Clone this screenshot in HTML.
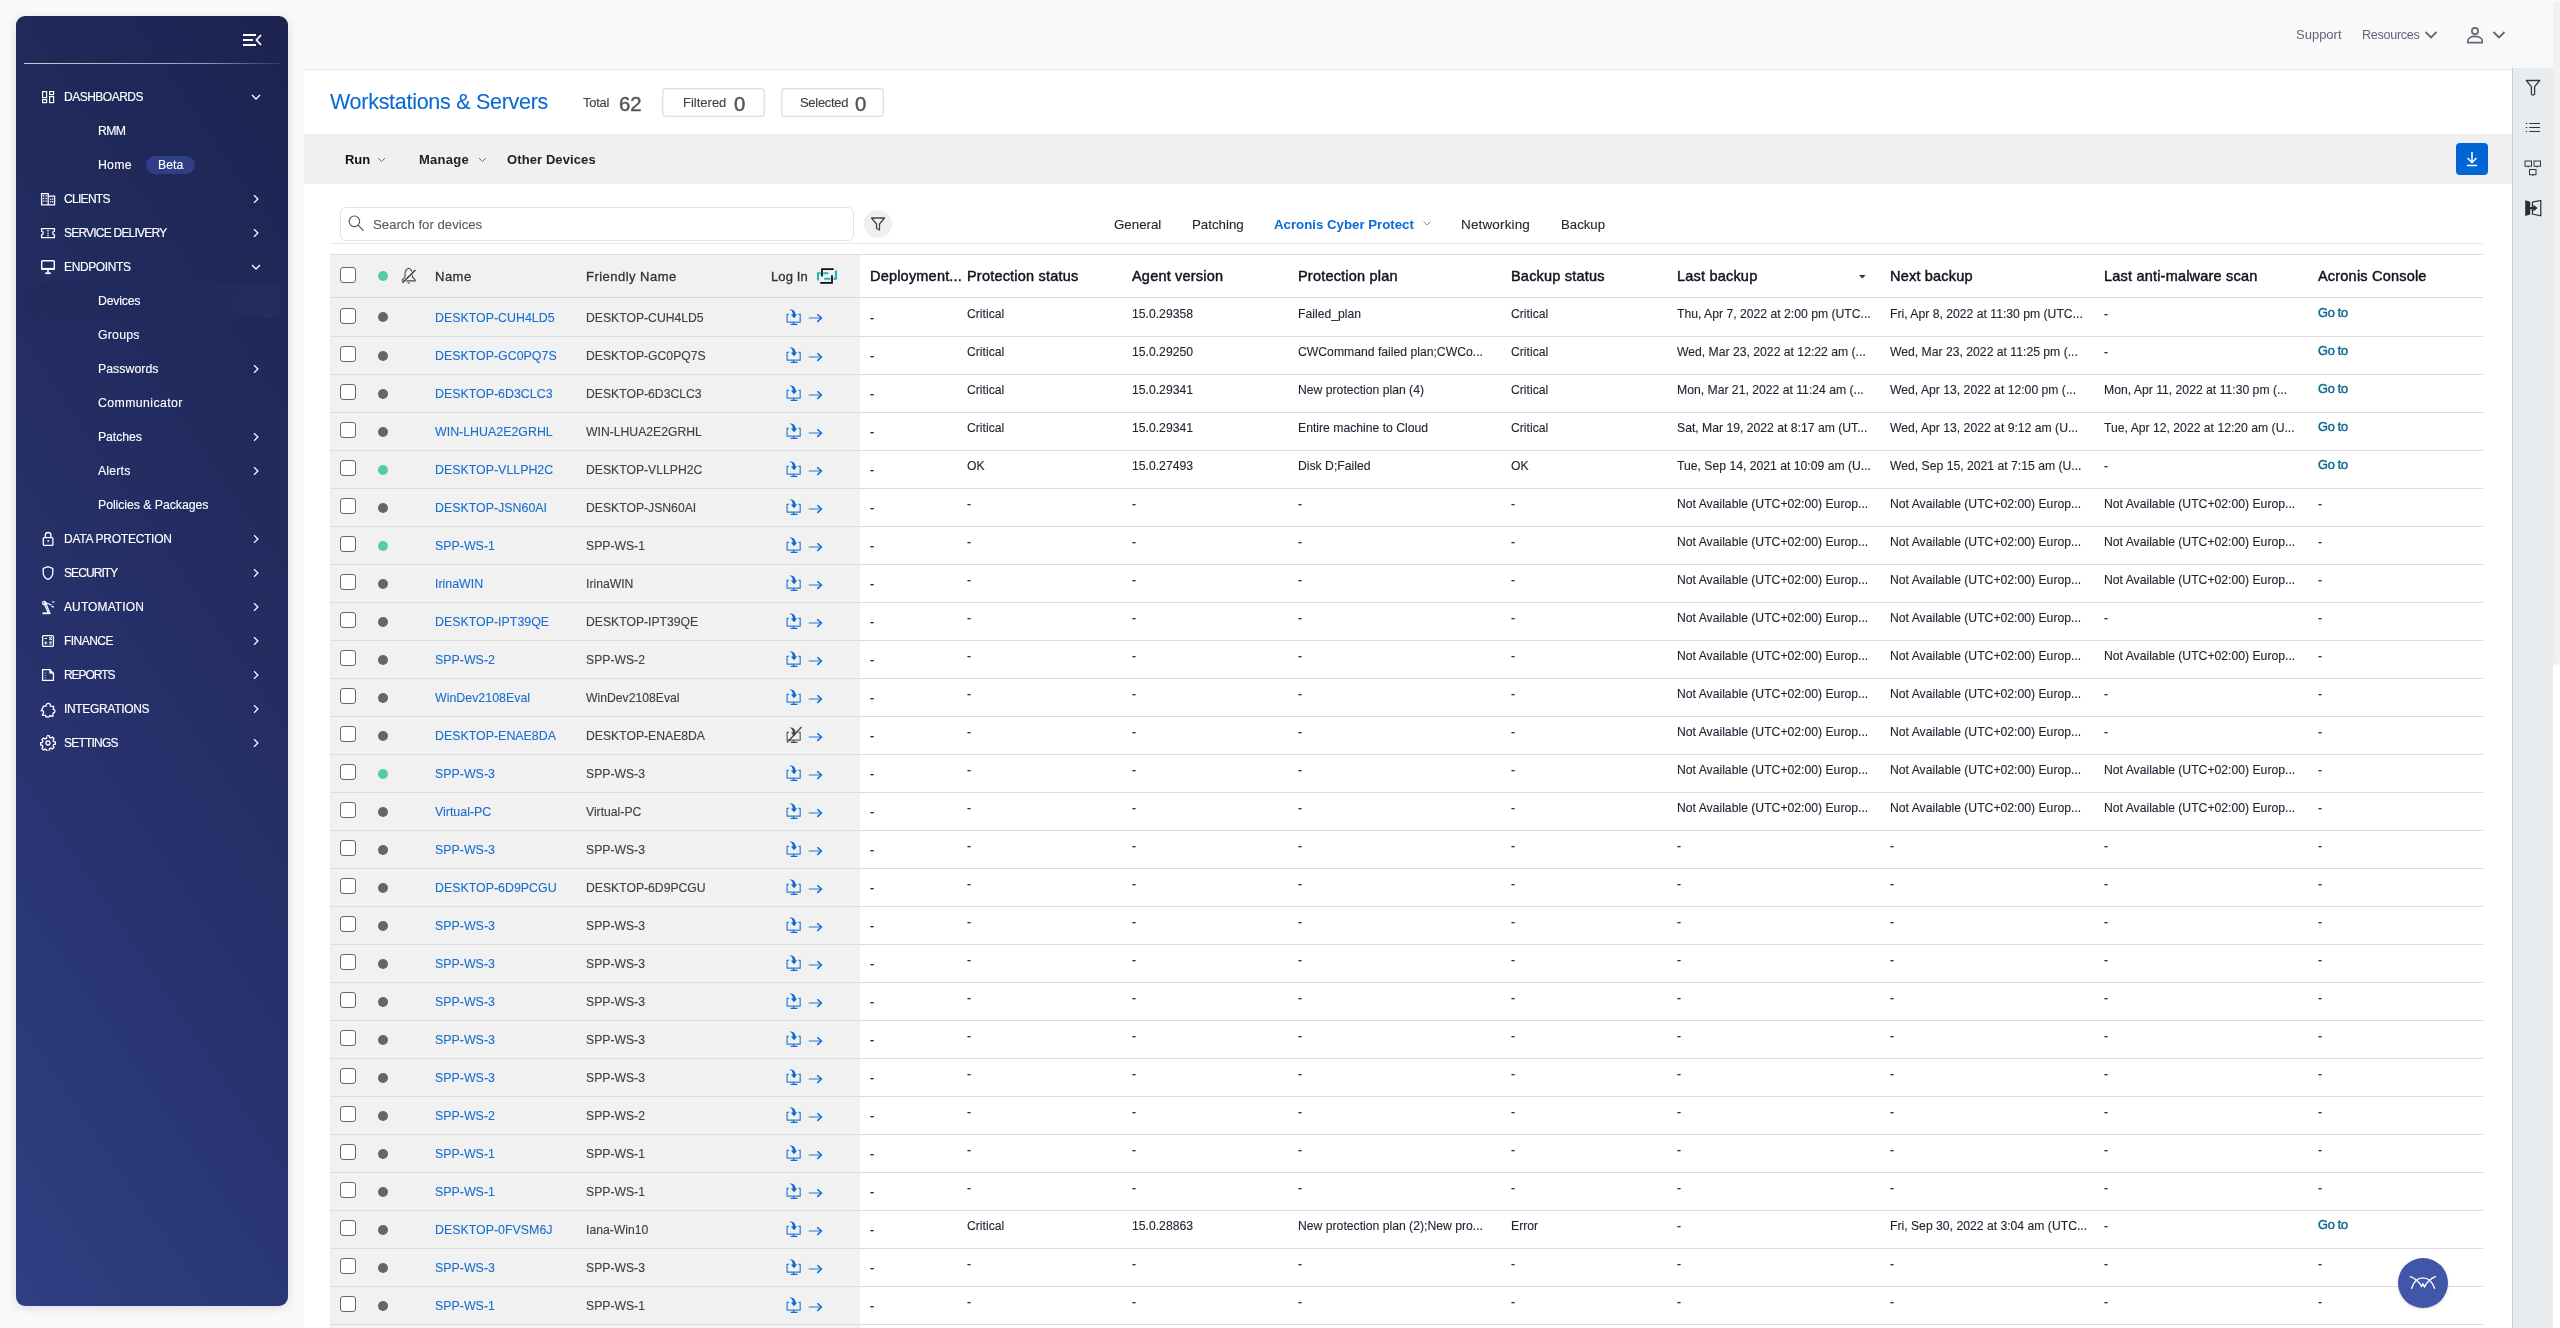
<!DOCTYPE html>
<html><head><meta charset="utf-8"><title>Workstations &amp; Servers</title>
<style>
html,body{margin:0;padding:0;width:2560px;height:1328px;overflow:hidden;background:#f9f9f9}
body{position:relative;font-family:"Liberation Sans",sans-serif;-webkit-font-smoothing:antialiased}
.t{position:absolute;white-space:nowrap}
#w{position:absolute;left:0;top:0;width:2560px;height:1328px;overflow:hidden;will-change:transform}
.r{position:absolute;display:block}
</style></head><body><div id="w">
<div class="r" style="left:0px;top:0px;width:2560px;height:1328px;background:#f9f9f9"></div>
<div class="r" style="left:304px;top:69px;width:2209px;height:1259px;background:#fff;border-top:1px solid #e9e9e9"></div>
<div class="r" style="left:2512px;top:68px;width:41px;height:1260px;background:#e9ecee;border-left:1px solid #c9cccf"></div>
<div class="r" style="left:2553px;top:0px;width:7px;height:1328px;background:#fff"></div>
<div class="r" style="left:2553px;top:0px;width:7px;height:665px;background:#f1f1f1;border-radius:3.5px"></div>
<div class="r" style="left:16px;top:16px;width:272px;height:1290px;border-radius:9px;background:linear-gradient(236deg,#1c2350 0%,#212a5c 28%,#27326d 60%,#2f3f82 100%);box-shadow:0 2px 10px rgba(0,0,0,0.12)"></div>
<svg class="r" style="left:242px;top:33px" width="20" height="14" viewBox="0 0 20 14"><g stroke="#fff" stroke-width="2" fill="none"><path d="M1 2H14M1 7H11M1 12H14"/><path d="M19 2L14.5 7L19 12" stroke-width="1.8"/></g></svg>
<div class="r" style="left:24px;top:63px;width:256px;height:1px;background:linear-gradient(90deg,rgba(255,255,255,0.75),rgba(255,255,255,0.55) 70%,rgba(255,255,255,0.08))"></div>
<div class="r" style="left:24px;top:284px;width:256px;height:34px;background:linear-gradient(90deg,rgba(8,12,45,0.08),rgba(8,12,45,0.02) 55%,rgba(255,255,255,0.025));border-radius:6px"></div>
<div class="t" style="left:64px;top:89.84px;font-size:12px;line-height:14px;color:#fff;letter-spacing:-0.502px;-webkit-text-stroke:0.15px #fff;">DASHBOARDS</div>
<svg class="r" style="left:251px;top:94px" width="10" height="7" viewBox="0 0 10 7"><path d="M1 1L5 5L9 1" stroke="#fff" stroke-width="1.4" fill="none"/></svg>
<div class="t" style="left:64px;top:191.84px;font-size:12px;line-height:14px;color:#fff;letter-spacing:-0.695px;-webkit-text-stroke:0.15px #fff;">CLIENTS</div>
<svg class="r" style="left:253px;top:194px" width="7" height="10" viewBox="0 0 7 10"><path d="M1 1.2L4.9 5L1 8.8" stroke="#fff" stroke-width="1.25" fill="none"/></svg>
<div class="t" style="left:64px;top:225.84px;font-size:12px;line-height:14px;color:#fff;letter-spacing:-0.787px;-webkit-text-stroke:0.15px #fff;">SERVICE DELIVERY</div>
<svg class="r" style="left:253px;top:228px" width="7" height="10" viewBox="0 0 7 10"><path d="M1 1.2L4.9 5L1 8.8" stroke="#fff" stroke-width="1.25" fill="none"/></svg>
<div class="t" style="left:64px;top:259.84px;font-size:12px;line-height:14px;color:#fff;letter-spacing:-0.375px;-webkit-text-stroke:0.15px #fff;">ENDPOINTS</div>
<svg class="r" style="left:251px;top:264px" width="10" height="7" viewBox="0 0 10 7"><path d="M1 1L5 5L9 1" stroke="#fff" stroke-width="1.4" fill="none"/></svg>
<div class="t" style="left:64px;top:531.84px;font-size:12px;line-height:14px;color:#fff;letter-spacing:-0.26px;-webkit-text-stroke:0.15px #fff;">DATA PROTECTION</div>
<svg class="r" style="left:253px;top:534px" width="7" height="10" viewBox="0 0 7 10"><path d="M1 1.2L4.9 5L1 8.8" stroke="#fff" stroke-width="1.25" fill="none"/></svg>
<div class="t" style="left:64px;top:565.84px;font-size:12px;line-height:14px;color:#fff;letter-spacing:-0.925px;-webkit-text-stroke:0.15px #fff;">SECURITY</div>
<svg class="r" style="left:253px;top:568px" width="7" height="10" viewBox="0 0 7 10"><path d="M1 1.2L4.9 5L1 8.8" stroke="#fff" stroke-width="1.25" fill="none"/></svg>
<div class="t" style="left:64px;top:599.84px;font-size:12px;line-height:14px;color:#fff;letter-spacing:0.103px;-webkit-text-stroke:0.15px #fff;">AUTOMATION</div>
<svg class="r" style="left:253px;top:602px" width="7" height="10" viewBox="0 0 7 10"><path d="M1 1.2L4.9 5L1 8.8" stroke="#fff" stroke-width="1.25" fill="none"/></svg>
<div class="t" style="left:64px;top:633.84px;font-size:12px;line-height:14px;color:#fff;letter-spacing:-0.529px;-webkit-text-stroke:0.15px #fff;">FINANCE</div>
<svg class="r" style="left:253px;top:636px" width="7" height="10" viewBox="0 0 7 10"><path d="M1 1.2L4.9 5L1 8.8" stroke="#fff" stroke-width="1.25" fill="none"/></svg>
<div class="t" style="left:64px;top:667.84px;font-size:12px;line-height:14px;color:#fff;letter-spacing:-1.047px;-webkit-text-stroke:0.15px #fff;">REPORTS</div>
<svg class="r" style="left:253px;top:670px" width="7" height="10" viewBox="0 0 7 10"><path d="M1 1.2L4.9 5L1 8.8" stroke="#fff" stroke-width="1.25" fill="none"/></svg>
<div class="t" style="left:64px;top:701.84px;font-size:12px;line-height:14px;color:#fff;letter-spacing:-0.327px;-webkit-text-stroke:0.15px #fff;">INTEGRATIONS</div>
<svg class="r" style="left:253px;top:704px" width="7" height="10" viewBox="0 0 7 10"><path d="M1 1.2L4.9 5L1 8.8" stroke="#fff" stroke-width="1.25" fill="none"/></svg>
<div class="t" style="left:64px;top:735.84px;font-size:12px;line-height:14px;color:#fff;letter-spacing:-0.783px;-webkit-text-stroke:0.15px #fff;">SETTINGS</div>
<svg class="r" style="left:253px;top:738px" width="7" height="10" viewBox="0 0 7 10"><path d="M1 1.2L4.9 5L1 8.8" stroke="#fff" stroke-width="1.25" fill="none"/></svg>
<div class="t" style="left:98px;top:123.94px;font-size:12.3px;line-height:15px;color:#fff;letter-spacing:-0.688px;-webkit-text-stroke:0.12px #fff;">RMM</div>
<div class="t" style="left:98px;top:157.94px;font-size:12.3px;line-height:15px;color:#fff;letter-spacing:0.229px;-webkit-text-stroke:0.12px #fff;">Home</div>
<div class="t" style="left:98px;top:293.94px;font-size:12.3px;line-height:15px;color:#fff;letter-spacing:-0.211px;-webkit-text-stroke:0.12px #fff;">Devices</div>
<div class="t" style="left:98px;top:327.94px;font-size:12.3px;line-height:15px;color:#fff;letter-spacing:0.231px;-webkit-text-stroke:0.12px #fff;">Groups</div>
<div class="t" style="left:98px;top:361.94px;font-size:12.3px;line-height:15px;color:#fff;letter-spacing:0.041px;-webkit-text-stroke:0.12px #fff;">Passwords</div>
<svg class="r" style="left:253px;top:364px" width="7" height="10" viewBox="0 0 7 10"><path d="M1 1.2L4.9 5L1 8.8" stroke="#fff" stroke-width="1.25" fill="none"/></svg>
<div class="t" style="left:98px;top:395.94px;font-size:12.3px;line-height:15px;color:#fff;letter-spacing:0.409px;-webkit-text-stroke:0.12px #fff;">Communicator</div>
<div class="t" style="left:98px;top:429.94px;font-size:12.3px;line-height:15px;color:#fff;letter-spacing:-0.095px;-webkit-text-stroke:0.12px #fff;">Patches</div>
<svg class="r" style="left:253px;top:432px" width="7" height="10" viewBox="0 0 7 10"><path d="M1 1.2L4.9 5L1 8.8" stroke="#fff" stroke-width="1.25" fill="none"/></svg>
<div class="t" style="left:98px;top:463.94px;font-size:12.3px;line-height:15px;color:#fff;letter-spacing:0.169px;-webkit-text-stroke:0.12px #fff;">Alerts</div>
<svg class="r" style="left:253px;top:466px" width="7" height="10" viewBox="0 0 7 10"><path d="M1 1.2L4.9 5L1 8.8" stroke="#fff" stroke-width="1.25" fill="none"/></svg>
<div class="t" style="left:98px;top:497.94px;font-size:12.3px;line-height:15px;color:#fff;letter-spacing:-0.056px;-webkit-text-stroke:0.12px #fff;">Policies &amp; Packages</div>
<div class="r" style="left:146px;top:156px;width:49px;height:18px;background:#2f3f86;border-radius:9px"></div>
<div class="t" style="left:158px;top:157.94px;font-size:12.3px;line-height:15px;color:#fff;-webkit-text-stroke:0.12px #fff;">Beta</div>
<svg class="r" style="left:41px;top:90px" width="14" height="14" viewBox="0 0 14 14"><g stroke="#fff" stroke-width="1.2" fill="none"><rect x="1.6" y="1.6" width="4" height="6"/><rect x="8.6" y="1.6" width="4" height="3"/><rect x="1.6" y="9.6" width="4" height="3"/><rect x="8.6" y="6.6" width="4" height="6"/></g></svg>
<svg class="r" style="left:40px;top:192px" width="16" height="14" viewBox="0 0 16 14"><g stroke="#fff" stroke-width="1.2" fill="none"><path d="M1.6 12.5V1.6H8.2V12.5M8.2 4.1H14.6V12.5M1 12.8H15.2" stroke-width="1.3"/></g><g fill="#fff"><rect x="3" y="3.3" width="1.3" height="1.3"/><rect x="5.5" y="3.3" width="1.3" height="1.3"/><rect x="3" y="5.9" width="1.3" height="1.3"/><rect x="5.5" y="5.9" width="1.3" height="1.3"/><rect x="3" y="8.5" width="1.3" height="1.3"/><rect x="5.5" y="8.5" width="1.3" height="1.3"/><rect x="10" y="6.5" width="1.3" height="1.3"/><rect x="12" y="6.5" width="1.3" height="1.3"/><rect x="10" y="9" width="1.3" height="1.3"/><rect x="12" y="9" width="1.3" height="1.3"/></g></svg>
<svg class="r" style="left:40px;top:226px" width="16" height="14" viewBox="0 0 16 14"><g stroke="#fff" stroke-width="1.2" fill="none"><path d="M1.6 2.6H14.4V5.4A1.7 1.7 0 0 0 14.4 8.8V11.6H1.6V8.8A1.7 1.7 0 0 0 1.6 5.4Z" stroke-width="1.3"/><path d="M8 4v1.4M8 6.4v1.4M8 8.8v1.4" stroke-width="1.3"/></g></svg>
<svg class="r" style="left:40px;top:259px" width="16" height="16" viewBox="0 0 16 16"><g stroke="#fff" stroke-width="1.2" fill="none"><rect x="1.7" y="1.7" width="12.6" height="8.6" rx="0.8" stroke-width="1.4"/><path d="M1.7 9.8H14.3" stroke-width="1.8"/><path d="M8 11v2.2" stroke-width="1.6"/><path d="M5.2 14.2H10.8" stroke-width="1.8"/></g></svg>
<svg class="r" style="left:41px;top:531px" width="13" height="16" viewBox="0 0 13 16"><g stroke="#fff" stroke-width="1.2" fill="none"><rect x="2.3" y="6.6" width="9.6" height="7.8" rx="0.9" stroke-width="1.3"/><path d="M4.3 6.6V4.3A2.8 2.8 0 0 1 9.9 4.3V6.6" stroke-width="1.3"/></g><rect x="6.4" y="9.2" width="1.6" height="1.6" fill="#fff"/></svg>
<svg class="r" style="left:41px;top:565px" width="13" height="16" viewBox="0 0 13 16"><g stroke="#fff" stroke-width="1.2" fill="none"><path d="M7 1.6L2.2 3.4V7.8C2.2 10.8 4.2 13.2 7 14.4C9.8 13.2 11.8 10.8 11.8 7.8V3.4Z" stroke-width="1.3"/></g></svg>
<svg class="r" style="left:41px;top:600px" width="15" height="15" viewBox="0 0 15 15"><g stroke="#fff" stroke-width="1.2" fill="none"><path d="M1.5 13.3H9.5" stroke-width="1.8"/><path d="M3 3.2L7.2 12.8M4.6 2.5L8.6 12.8M3.4 2.6L9 4.3" /><circle cx="3.2" cy="3" r="1.6"/><path d="M9 4.3L10.6 5.3M11 2.2A2 2 0 0 1 13.4 2.2M10.6 6.2A2 2 0 0 0 12.8 6.6"/></g></svg>
<svg class="r" style="left:41px;top:634px" width="14" height="14" viewBox="0 0 14 14"><g stroke="#fff" stroke-width="1.2" fill="none"><rect x="1.6" y="1.6" width="10.8" height="10.8" rx="1.2" stroke-width="1.3"/><path d="M3.4 4.5H6M8.4 3.2L10.8 5.8M10.8 3.2L8.4 5.8M3.4 9H6.2M4.8 7.6V10.4M8.2 8.1H10.8M8.2 10H10.8" stroke-width="1.1"/></g></svg>
<svg class="r" style="left:41px;top:668px" width="14" height="14" viewBox="0 0 14 14"><g stroke="#fff" stroke-width="1.2" fill="none"><path d="M1.6 1.6H8.8L12.4 5.2V12.4H1.6Z" stroke-width="1.3"/><path d="M8.8 1.6V5.2H12.4" stroke-width="1"/><path d="M9 2L12 5H9Z" fill="#fff" stroke="none"/><path d="M4.3 4.6v0.8M4.3 7v0.8M4.3 9.4v0.8" stroke-width="1"/></g></svg>
<svg class="r" style="left:40px;top:702px" width="16" height="16" viewBox="0 0 16 16"><g stroke="#fff" stroke-width="1.2" fill="none"><path d="M3.5 4.2L6 4.2C6 2.4 7 1.4 8.4 1.4C9.8 1.4 10.5 2.6 10.4 4.2L13.6 4.4L13.2 7.2C14.6 7.4 15 8.3 15 9.1C15 10 14.4 10.8 13.2 11L12.8 14.2L9.6 13.8C9.4 15 8.6 15.2 7.6 15.2C6.4 15.2 5.6 14.6 5.6 13.4L2.4 13.2C2.8 12 3.6 11.2 3.6 10.2C3.6 9 2.4 8.6 1.4 8.6L3.5 4.2Z" stroke-width="1.3"/></g></svg>
<svg class="r" style="left:40px;top:735px" width="16" height="16" viewBox="0 0 16 16"><g stroke="#fff" stroke-width="1.2" fill="none"><circle cx="8" cy="8" r="2" stroke-width="1.3"/><path d="M6.9 1.5H9.1L9.5 3.2L10.9 3.9L12.5 3L14 4.6L13.1 6.1L13.7 7.6L15.4 8V10.1L13.7 10.5L13.1 11.9L14 13.5L12.5 15L10.9 14.1L9.5 14.8L9.1 16.5" transform="translate(0,-1)" stroke-width="1.3"/><path d="M9.1 15.5H6.9L6.5 13.8L5.1 13.1L3.5 14L2 12.4L2.9 10.9L2.3 9.4L0.6 9V6.9L2.3 6.5L2.9 5.1L2 3.5L3.5 2L5.1 2.9L6.5 2.2L6.9 0.5" transform="translate(0,1)" stroke-width="1.3"/></g></svg>
<div class="t" style="left:2296px;top:26.50px;font-size:13px;line-height:16px;color:#5f6676;">Support</div>
<div class="t" style="left:2362px;top:28.13px;font-size:12.6px;line-height:15px;color:#5f6676;letter-spacing:-0.3px;">Resources</div>
<svg class="r" style="left:2424px;top:30px" width="14" height="10" viewBox="0 0 14 10"><path d="M1.5 2L7 7.5L12.5 2" stroke="#5f6676" stroke-width="1.8" fill="none"/></svg>
<svg class="r" style="left:2465px;top:26px" width="20" height="18" viewBox="0 0 20 18"><g stroke="#5f6676" stroke-width="1.7" fill="none"><circle cx="10" cy="5" r="3.1"/><path d="M2.8 16.6V14.8C2.8 12.2 6 10.4 10 10.4C14 10.4 17.2 12.2 17.2 14.8V16.6Z"/></g></svg>
<svg class="r" style="left:2492px;top:30px" width="14" height="10" viewBox="0 0 14 10"><path d="M1.5 2L7 7.5L12.5 2" stroke="#5f6676" stroke-width="1.8" fill="none"/></svg>
<div class="t" style="left:330px;top:89.15px;font-size:21.5px;line-height:26px;color:#0a6ad6;letter-spacing:-0.28px;-webkit-text-stroke:0.1px #0a6ad6;">Workstations &amp; Servers</div>
<div class="t" style="left:583px;top:95.03px;font-size:12.9px;line-height:15px;color:#3f3f3f;letter-spacing:-0.2px;-webkit-text-stroke:0.12px #3f3f3f;">Total</div>
<div class="t" style="left:619px;top:91.97px;font-size:20.3px;line-height:24px;color:#555;-webkit-text-stroke:0.45px #555;">62</div>
<div class="r" style="left:662px;top:88px;width:103px;height:29px;box-shadow:inset 0 0 0 1.5px #e2e2e2;border-radius:4px"></div>
<div class="t" style="left:683px;top:94.50px;font-size:13px;line-height:16px;color:#3f3f3f;-webkit-text-stroke:0.12px #3f3f3f;">Filtered</div>
<div class="t" style="left:734px;top:91.97px;font-size:20.3px;line-height:24px;color:#555;-webkit-text-stroke:0.45px #555;">0</div>
<div class="r" style="left:781px;top:88px;width:103px;height:29px;box-shadow:inset 0 0 0 1.5px #e2e2e2;border-radius:4px"></div>
<div class="t" style="left:800px;top:94.50px;font-size:13px;line-height:16px;color:#3f3f3f;letter-spacing:-0.3px;-webkit-text-stroke:0.12px #3f3f3f;">Selected</div>
<div class="t" style="left:855px;top:91.97px;font-size:20.3px;line-height:24px;color:#555;-webkit-text-stroke:0.45px #555;">0</div>
<div class="r" style="left:304px;top:134px;width:2208px;height:50px;background:#f0f0f0"></div>
<div class="t" style="left:345px;top:151.50px;font-size:13px;line-height:16px;color:#111;font-weight:700;letter-spacing:-0.1px;">Run</div>
<svg class="r" style="left:377px;top:157px" width="9" height="6" viewBox="0 0 9 6"><path d="M1 1L4.5 4.5L8 1" stroke="#777" stroke-width="1" fill="none"/></svg>
<div class="t" style="left:419px;top:151.50px;font-size:13px;line-height:16px;color:#222;font-weight:700;letter-spacing:0.25px;">Manage</div>
<svg class="r" style="left:478px;top:157px" width="9" height="6" viewBox="0 0 9 6"><path d="M1 1L4.5 4.5L8 1" stroke="#777" stroke-width="1" fill="none"/></svg>
<div class="t" style="left:507px;top:151.50px;font-size:13px;line-height:16px;color:#222;font-weight:700;letter-spacing:0.1px;">Other Devices</div>
<div class="r" style="left:2456px;top:143px;width:32px;height:32px;background:#0066d4;border-radius:4px"></div>
<svg class="r" style="left:2463px;top:150px" width="18" height="18" viewBox="0 0 18 18"><g stroke="#fff" stroke-width="1.5" fill="none"><path d="M9 2V12M4.5 8L9 12.5L13.5 8M4 15.5H14"/></g></svg>
<div class="r" style="left:340px;top:207px;width:514px;height:34px;border:1px solid #e4e4e4;border-radius:6px;box-sizing:border-box;background:#fff"></div>
<svg class="r" style="left:348px;top:215px" width="17" height="17" viewBox="0 0 17 17"><g stroke="#425353" stroke-width="1.1" fill="none"><circle cx="6.4" cy="6.3" r="5.3"/><path d="M10.1 10.2L15.5 15.9"/></g></svg>
<div class="t" style="left:373px;top:217.03px;font-size:13.2px;line-height:16px;color:#5a5a5a;-webkit-text-stroke:0.1px #5a5a5a;">Search for devices</div>
<div class="r" style="left:864px;top:210px;width:28px;height:28px;background:#efefef;border-radius:14px"></div>
<svg class="r" style="left:870px;top:216px" width="16" height="16" viewBox="0 0 16 16"><path d="M1.5 2H14.5L9.5 8V14L6.5 12.5V8Z" stroke="#444" stroke-width="1.3" fill="none" stroke-linejoin="round"/></svg>
<div class="t" style="left:1114px;top:216.89px;font-size:13.3px;line-height:16px;color:#262626;-webkit-text-stroke:0.1px #262626;">General</div>
<div class="t" style="left:1192px;top:216.89px;font-size:13.3px;line-height:16px;color:#262626;-webkit-text-stroke:0.1px #262626;">Patching</div>
<div class="t" style="left:1274px;top:216.91px;font-size:13.25px;line-height:16px;color:#0a6ad6;font-weight:700;">Acronis Cyber Protect</div>
<svg class="r" style="left:1423px;top:221px" width="8" height="6" viewBox="0 0 8 6"><path d="M0.5 0.5L4 4L7.5 0.5" stroke="#888" stroke-width="1" fill="none"/></svg>
<div class="t" style="left:1461px;top:216.82px;font-size:13.5px;line-height:16px;color:#262626;letter-spacing:0.15px;-webkit-text-stroke:0.1px #262626;">Networking</div>
<div class="t" style="left:1561px;top:216.93px;font-size:13.2px;line-height:16px;color:#262626;-webkit-text-stroke:0.1px #262626;">Backup</div>
<div class="r" style="left:330px;top:243px;width:2153px;height:1px;background:#e6e6e6"></div>
<div class="r" style="left:330px;top:254px;width:2153px;height:1px;background:#dcdcdc"></div>
<div class="r" style="left:330px;top:255px;width:530px;height:43px;background:#f1f1f1"></div>
<div class="r" style="left:330px;top:297px;width:2153px;height:1px;background:#d9d9d9"></div>
<div class="r" style="left:340px;top:267px;width:16px;height:16px;border:1.5px solid #666;border-radius:3px;background:#fff;box-sizing:border-box"></div>
<div class="r" style="left:378px;top:271px;width:10px;height:10px;background:#52cf9c;border-radius:5px"></div>
<svg class="r" style="left:400px;top:266px" width="18" height="19" viewBox="0 0 18 19"><g stroke="#444" stroke-width="1.1" fill="none" stroke-linejoin="round"><path d="M8.6 2.3C6.2 3.2 5 5.2 5 8V11.2L2.3 13.9V14.9H15.2V13.9L12.4 11.2V8C12.4 5.2 11 3.2 8.6 2.3Z"/><path d="M7.6 17H9.8"/></g><path d="M2.6 16.8L15.4 4" stroke="#f1f1f1" stroke-width="2.6"/><path d="M2.6 16.8L15.4 4" stroke="#333" stroke-width="1.3"/></svg>
<div class="t" style="left:435px;top:268.70px;font-size:13px;line-height:16px;color:#333;letter-spacing:0.5px;-webkit-text-stroke:0.3px #333;">Name</div>
<div class="t" style="left:586px;top:268.70px;font-size:13px;line-height:16px;color:#333;letter-spacing:0.47px;-webkit-text-stroke:0.3px #333;">Friendly Name</div>
<div class="t" style="left:771px;top:268.70px;font-size:13px;line-height:16px;color:#333;letter-spacing:0.1px;-webkit-text-stroke:0.3px #333;">Log In</div>
<svg class="r" style="left:814px;top:265px" width="26" height="22" viewBox="0 0 26 22"><g fill="none" stroke-linecap="butt" stroke-linejoin="miter"><path d="M4 15.6V8.2H14.3" stroke="#1dbab3" stroke-width="2.1"/><path d="M22 5.6V13.8H10.2" stroke="#1dbab3" stroke-width="2.1"/><path d="M8 11.5V4H19.6" stroke="#f1f1f1" stroke-width="2.7"/><path d="M8 11.5V4H19.6" stroke="#06111f" stroke-width="1.75"/><path d="M18 10.3V17.9H6.2" stroke="#f1f1f1" stroke-width="2.7"/><path d="M18 10.3V17.9H6.2" stroke="#06111f" stroke-width="1.75"/></g></svg>
<div class="t" style="left:870px;top:267.68px;font-size:14.5px;line-height:17px;color:#10141f;letter-spacing:0.2px;-webkit-text-stroke:0.45px #10141f;">Deployment...</div>
<div class="t" style="left:967px;top:267.68px;font-size:14.5px;line-height:17px;color:#10141f;letter-spacing:0.2px;-webkit-text-stroke:0.45px #10141f;">Protection status</div>
<div class="t" style="left:1132px;top:267.68px;font-size:14.5px;line-height:17px;color:#10141f;letter-spacing:0.2px;-webkit-text-stroke:0.45px #10141f;">Agent version</div>
<div class="t" style="left:1298px;top:267.68px;font-size:14.5px;line-height:17px;color:#10141f;letter-spacing:0.2px;-webkit-text-stroke:0.45px #10141f;">Protection plan</div>
<div class="t" style="left:1511px;top:267.68px;font-size:14.5px;line-height:17px;color:#10141f;letter-spacing:0.2px;-webkit-text-stroke:0.45px #10141f;">Backup status</div>
<div class="t" style="left:1677px;top:267.68px;font-size:14.5px;line-height:17px;color:#10141f;letter-spacing:0.2px;-webkit-text-stroke:0.45px #10141f;">Last backup</div>
<div class="t" style="left:1890px;top:267.68px;font-size:14.5px;line-height:17px;color:#10141f;letter-spacing:0.2px;-webkit-text-stroke:0.45px #10141f;">Next backup</div>
<div class="t" style="left:2104px;top:267.68px;font-size:14.5px;line-height:17px;color:#10141f;letter-spacing:0.2px;-webkit-text-stroke:0.45px #10141f;">Last anti-malware scan</div>
<div class="t" style="left:2318px;top:267.68px;font-size:14.5px;line-height:17px;color:#10141f;letter-spacing:0.2px;-webkit-text-stroke:0.45px #10141f;">Acronis Console</div>
<svg class="r" style="left:1859px;top:275px" width="7" height="4" viewBox="0 0 7 4"><path d="M0 0H6.6L3.3 3.6Z" fill="#333"/></svg>
<div class="r" style="left:330px;top:298px;width:530px;height:38px;background:#f1f1f1"></div>
<div class="r" style="left:330px;top:336px;width:2153px;height:1px;background:#dcdcdc"></div>
<div class="r" style="left:340px;top:308px;width:16px;height:16px;border:1.5px solid #666;border-radius:3px;background:#fff;box-sizing:border-box"></div>
<div class="r" style="left:378px;top:312px;width:10px;height:10px;background:#666;border-radius:5px"></div>
<div class="t" style="left:435px;top:310.70px;font-size:12.4px;line-height:15px;color:#1a6fcf;-webkit-text-stroke:0.1px #1a6fcf;">DESKTOP-CUH4LD5</div>
<div class="t" style="left:586px;top:310.77px;font-size:12.2px;line-height:15px;color:#3d4045;-webkit-text-stroke:0.12px #3d4045;">DESKTOP-CUH4LD5</div>
<svg class="r" style="left:786px;top:308px" width="16" height="17" viewBox="0 0 16 17"><g fill="none" stroke="#0b6bd3" stroke-width="1.2"><path d="M2.9 6.4H1.1V14.2H14.2V6.4H12.4" opacity="0.85"/><path d="M7.6 14.2V16.2M4.6 16.5H11.4" stroke-width="1.3"/></g><path d="M3.2 1.6C6.6 1 9.3 2.6 9.7 6.4H11.2L8 10.3L4.9 6.4H6.8C6.8 4 5.6 2.4 3.2 1.6Z" fill="#0b6bd3"/></svg>
<svg class="r" style="left:808px;top:313px" width="15" height="11" viewBox="0 0 15 11"><g stroke="#0b6bd3" stroke-width="1.5" fill="none"><path d="M0.8 5H12.6" opacity="0.6"/><path d="M9.3 1.2L13.4 5L9.3 8.9"/></g></svg>
<div class="t" style="left:870px;top:310.77px;font-size:12.2px;line-height:15px;color:#111;-webkit-text-stroke:0.12px #111;">-</div>
<div class="t" style="left:967px;top:306.77px;font-size:12.2px;line-height:15px;color:#1f2330;-webkit-text-stroke:0.12px #1f2330;">Critical</div>
<div class="t" style="left:1132px;top:306.77px;font-size:12.2px;line-height:15px;color:#1f2330;-webkit-text-stroke:0.12px #1f2330;">15.0.29358</div>
<div class="t" style="left:1298px;top:306.77px;font-size:12.2px;line-height:15px;color:#1f2330;-webkit-text-stroke:0.12px #1f2330;">Failed_plan</div>
<div class="t" style="left:1511px;top:306.77px;font-size:12.2px;line-height:15px;color:#1f2330;-webkit-text-stroke:0.12px #1f2330;">Critical</div>
<div class="t" style="left:1677px;top:306.77px;font-size:12.2px;line-height:15px;color:#1f2330;-webkit-text-stroke:0.12px #1f2330;">Thu, Apr 7, 2022 at 2:00 pm (UTC...</div>
<div class="t" style="left:1890px;top:306.77px;font-size:12.2px;line-height:15px;color:#1f2330;-webkit-text-stroke:0.12px #1f2330;">Fri, Apr 8, 2022 at 11:30 pm (UTC...</div>
<div class="t" style="left:2104px;top:306.77px;font-size:12.2px;line-height:15px;color:#1f2330;-webkit-text-stroke:0.12px #1f2330;">-</div>
<div class="t" style="left:2318px;top:304.96px;font-size:12.8px;line-height:15px;color:#0d6a93;letter-spacing:-0.3px;-webkit-text-stroke:0.45px #0d6a93;">Go to</div>
<div class="r" style="left:330px;top:337px;width:530px;height:37px;background:#f1f1f1"></div>
<div class="r" style="left:330px;top:374px;width:2153px;height:1px;background:#dcdcdc"></div>
<div class="r" style="left:340px;top:346px;width:16px;height:16px;border:1.5px solid #666;border-radius:3px;background:#fff;box-sizing:border-box"></div>
<div class="r" style="left:378px;top:351px;width:10px;height:10px;background:#666;border-radius:5px"></div>
<div class="t" style="left:435px;top:349.20px;font-size:12.4px;line-height:15px;color:#1a6fcf;-webkit-text-stroke:0.1px #1a6fcf;">DESKTOP-GC0PQ7S</div>
<div class="t" style="left:586px;top:349.27px;font-size:12.2px;line-height:15px;color:#3d4045;-webkit-text-stroke:0.12px #3d4045;">DESKTOP-GC0PQ7S</div>
<svg class="r" style="left:786px;top:346px" width="16" height="17" viewBox="0 0 16 17"><g fill="none" stroke="#0b6bd3" stroke-width="1.2"><path d="M2.9 6.4H1.1V14.2H14.2V6.4H12.4" opacity="0.85"/><path d="M7.6 14.2V16.2M4.6 16.5H11.4" stroke-width="1.3"/></g><path d="M3.2 1.6C6.6 1 9.3 2.6 9.7 6.4H11.2L8 10.3L4.9 6.4H6.8C6.8 4 5.6 2.4 3.2 1.6Z" fill="#0b6bd3"/></svg>
<svg class="r" style="left:808px;top:352px" width="15" height="11" viewBox="0 0 15 11"><g stroke="#0b6bd3" stroke-width="1.5" fill="none"><path d="M0.8 5H12.6" opacity="0.6"/><path d="M9.3 1.2L13.4 5L9.3 8.9"/></g></svg>
<div class="t" style="left:870px;top:349.27px;font-size:12.2px;line-height:15px;color:#111;-webkit-text-stroke:0.12px #111;">-</div>
<div class="t" style="left:967px;top:345.27px;font-size:12.2px;line-height:15px;color:#1f2330;-webkit-text-stroke:0.12px #1f2330;">Critical</div>
<div class="t" style="left:1132px;top:345.27px;font-size:12.2px;line-height:15px;color:#1f2330;-webkit-text-stroke:0.12px #1f2330;">15.0.29250</div>
<div class="t" style="left:1298px;top:345.27px;font-size:12.2px;line-height:15px;color:#1f2330;-webkit-text-stroke:0.12px #1f2330;">CWCommand failed plan;CWCo...</div>
<div class="t" style="left:1511px;top:345.27px;font-size:12.2px;line-height:15px;color:#1f2330;-webkit-text-stroke:0.12px #1f2330;">Critical</div>
<div class="t" style="left:1677px;top:345.27px;font-size:12.2px;line-height:15px;color:#1f2330;-webkit-text-stroke:0.12px #1f2330;">Wed, Mar 23, 2022 at 12:22 am (...</div>
<div class="t" style="left:1890px;top:345.27px;font-size:12.2px;line-height:15px;color:#1f2330;-webkit-text-stroke:0.12px #1f2330;">Wed, Mar 23, 2022 at 11:25 pm (...</div>
<div class="t" style="left:2104px;top:345.27px;font-size:12.2px;line-height:15px;color:#1f2330;-webkit-text-stroke:0.12px #1f2330;">-</div>
<div class="t" style="left:2318px;top:343.46px;font-size:12.8px;line-height:15px;color:#0d6a93;letter-spacing:-0.3px;-webkit-text-stroke:0.45px #0d6a93;">Go to</div>
<div class="r" style="left:330px;top:375px;width:530px;height:37px;background:#f1f1f1"></div>
<div class="r" style="left:330px;top:412px;width:2153px;height:1px;background:#dcdcdc"></div>
<div class="r" style="left:340px;top:384px;width:16px;height:16px;border:1.5px solid #666;border-radius:3px;background:#fff;box-sizing:border-box"></div>
<div class="r" style="left:378px;top:389px;width:10px;height:10px;background:#666;border-radius:5px"></div>
<div class="t" style="left:435px;top:387.20px;font-size:12.4px;line-height:15px;color:#1a6fcf;-webkit-text-stroke:0.1px #1a6fcf;">DESKTOP-6D3CLC3</div>
<div class="t" style="left:586px;top:387.27px;font-size:12.2px;line-height:15px;color:#3d4045;-webkit-text-stroke:0.12px #3d4045;">DESKTOP-6D3CLC3</div>
<svg class="r" style="left:786px;top:384px" width="16" height="17" viewBox="0 0 16 17"><g fill="none" stroke="#0b6bd3" stroke-width="1.2"><path d="M2.9 6.4H1.1V14.2H14.2V6.4H12.4" opacity="0.85"/><path d="M7.6 14.2V16.2M4.6 16.5H11.4" stroke-width="1.3"/></g><path d="M3.2 1.6C6.6 1 9.3 2.6 9.7 6.4H11.2L8 10.3L4.9 6.4H6.8C6.8 4 5.6 2.4 3.2 1.6Z" fill="#0b6bd3"/></svg>
<svg class="r" style="left:808px;top:390px" width="15" height="11" viewBox="0 0 15 11"><g stroke="#0b6bd3" stroke-width="1.5" fill="none"><path d="M0.8 5H12.6" opacity="0.6"/><path d="M9.3 1.2L13.4 5L9.3 8.9"/></g></svg>
<div class="t" style="left:870px;top:387.27px;font-size:12.2px;line-height:15px;color:#111;-webkit-text-stroke:0.12px #111;">-</div>
<div class="t" style="left:967px;top:383.27px;font-size:12.2px;line-height:15px;color:#1f2330;-webkit-text-stroke:0.12px #1f2330;">Critical</div>
<div class="t" style="left:1132px;top:383.27px;font-size:12.2px;line-height:15px;color:#1f2330;-webkit-text-stroke:0.12px #1f2330;">15.0.29341</div>
<div class="t" style="left:1298px;top:383.27px;font-size:12.2px;line-height:15px;color:#1f2330;-webkit-text-stroke:0.12px #1f2330;">New protection plan (4)</div>
<div class="t" style="left:1511px;top:383.27px;font-size:12.2px;line-height:15px;color:#1f2330;-webkit-text-stroke:0.12px #1f2330;">Critical</div>
<div class="t" style="left:1677px;top:383.27px;font-size:12.2px;line-height:15px;color:#1f2330;-webkit-text-stroke:0.12px #1f2330;">Mon, Mar 21, 2022 at 11:24 am (...</div>
<div class="t" style="left:1890px;top:383.27px;font-size:12.2px;line-height:15px;color:#1f2330;-webkit-text-stroke:0.12px #1f2330;">Wed, Apr 13, 2022 at 12:00 pm (...</div>
<div class="t" style="left:2104px;top:383.27px;font-size:12.2px;line-height:15px;color:#1f2330;-webkit-text-stroke:0.12px #1f2330;">Mon, Apr 11, 2022 at 11:30 pm (...</div>
<div class="t" style="left:2318px;top:381.46px;font-size:12.8px;line-height:15px;color:#0d6a93;letter-spacing:-0.3px;-webkit-text-stroke:0.45px #0d6a93;">Go to</div>
<div class="r" style="left:330px;top:413px;width:530px;height:37px;background:#f1f1f1"></div>
<div class="r" style="left:330px;top:450px;width:2153px;height:1px;background:#dcdcdc"></div>
<div class="r" style="left:340px;top:422px;width:16px;height:16px;border:1.5px solid #666;border-radius:3px;background:#fff;box-sizing:border-box"></div>
<div class="r" style="left:378px;top:427px;width:10px;height:10px;background:#666;border-radius:5px"></div>
<div class="t" style="left:435px;top:425.20px;font-size:12.4px;line-height:15px;color:#1a6fcf;-webkit-text-stroke:0.1px #1a6fcf;">WIN-LHUA2E2GRHL</div>
<div class="t" style="left:586px;top:425.27px;font-size:12.2px;line-height:15px;color:#3d4045;-webkit-text-stroke:0.12px #3d4045;">WIN-LHUA2E2GRHL</div>
<svg class="r" style="left:786px;top:422px" width="16" height="17" viewBox="0 0 16 17"><g fill="none" stroke="#0b6bd3" stroke-width="1.2"><path d="M2.9 6.4H1.1V14.2H14.2V6.4H12.4" opacity="0.85"/><path d="M7.6 14.2V16.2M4.6 16.5H11.4" stroke-width="1.3"/></g><path d="M3.2 1.6C6.6 1 9.3 2.6 9.7 6.4H11.2L8 10.3L4.9 6.4H6.8C6.8 4 5.6 2.4 3.2 1.6Z" fill="#0b6bd3"/></svg>
<svg class="r" style="left:808px;top:428px" width="15" height="11" viewBox="0 0 15 11"><g stroke="#0b6bd3" stroke-width="1.5" fill="none"><path d="M0.8 5H12.6" opacity="0.6"/><path d="M9.3 1.2L13.4 5L9.3 8.9"/></g></svg>
<div class="t" style="left:870px;top:425.27px;font-size:12.2px;line-height:15px;color:#111;-webkit-text-stroke:0.12px #111;">-</div>
<div class="t" style="left:967px;top:421.27px;font-size:12.2px;line-height:15px;color:#1f2330;-webkit-text-stroke:0.12px #1f2330;">Critical</div>
<div class="t" style="left:1132px;top:421.27px;font-size:12.2px;line-height:15px;color:#1f2330;-webkit-text-stroke:0.12px #1f2330;">15.0.29341</div>
<div class="t" style="left:1298px;top:421.27px;font-size:12.2px;line-height:15px;color:#1f2330;-webkit-text-stroke:0.12px #1f2330;">Entire machine to Cloud</div>
<div class="t" style="left:1511px;top:421.27px;font-size:12.2px;line-height:15px;color:#1f2330;-webkit-text-stroke:0.12px #1f2330;">Critical</div>
<div class="t" style="left:1677px;top:421.27px;font-size:12.2px;line-height:15px;color:#1f2330;-webkit-text-stroke:0.12px #1f2330;">Sat, Mar 19, 2022 at 8:17 am (UT...</div>
<div class="t" style="left:1890px;top:421.27px;font-size:12.2px;line-height:15px;color:#1f2330;-webkit-text-stroke:0.12px #1f2330;">Wed, Apr 13, 2022 at 9:12 am (U...</div>
<div class="t" style="left:2104px;top:421.27px;font-size:12.2px;line-height:15px;color:#1f2330;-webkit-text-stroke:0.12px #1f2330;">Tue, Apr 12, 2022 at 12:20 am (U...</div>
<div class="t" style="left:2318px;top:419.46px;font-size:12.8px;line-height:15px;color:#0d6a93;letter-spacing:-0.3px;-webkit-text-stroke:0.45px #0d6a93;">Go to</div>
<div class="r" style="left:330px;top:451px;width:530px;height:37px;background:#f1f1f1"></div>
<div class="r" style="left:330px;top:488px;width:2153px;height:1px;background:#dcdcdc"></div>
<div class="r" style="left:340px;top:460px;width:16px;height:16px;border:1.5px solid #666;border-radius:3px;background:#fff;box-sizing:border-box"></div>
<div class="r" style="left:378px;top:465px;width:10px;height:10px;background:#52cf9c;border-radius:5px"></div>
<div class="t" style="left:435px;top:463.20px;font-size:12.4px;line-height:15px;color:#1a6fcf;-webkit-text-stroke:0.1px #1a6fcf;">DESKTOP-VLLPH2C</div>
<div class="t" style="left:586px;top:463.27px;font-size:12.2px;line-height:15px;color:#3d4045;-webkit-text-stroke:0.12px #3d4045;">DESKTOP-VLLPH2C</div>
<svg class="r" style="left:786px;top:460px" width="16" height="17" viewBox="0 0 16 17"><g fill="none" stroke="#0b6bd3" stroke-width="1.2"><path d="M2.9 6.4H1.1V14.2H14.2V6.4H12.4" opacity="0.85"/><path d="M7.6 14.2V16.2M4.6 16.5H11.4" stroke-width="1.3"/></g><path d="M3.2 1.6C6.6 1 9.3 2.6 9.7 6.4H11.2L8 10.3L4.9 6.4H6.8C6.8 4 5.6 2.4 3.2 1.6Z" fill="#0b6bd3"/></svg>
<svg class="r" style="left:808px;top:466px" width="15" height="11" viewBox="0 0 15 11"><g stroke="#0b6bd3" stroke-width="1.5" fill="none"><path d="M0.8 5H12.6" opacity="0.6"/><path d="M9.3 1.2L13.4 5L9.3 8.9"/></g></svg>
<div class="t" style="left:870px;top:463.27px;font-size:12.2px;line-height:15px;color:#111;-webkit-text-stroke:0.12px #111;">-</div>
<div class="t" style="left:967px;top:459.27px;font-size:12.2px;line-height:15px;color:#1f2330;-webkit-text-stroke:0.12px #1f2330;">OK</div>
<div class="t" style="left:1132px;top:459.27px;font-size:12.2px;line-height:15px;color:#1f2330;-webkit-text-stroke:0.12px #1f2330;">15.0.27493</div>
<div class="t" style="left:1298px;top:459.27px;font-size:12.2px;line-height:15px;color:#1f2330;-webkit-text-stroke:0.12px #1f2330;">Disk D;Failed</div>
<div class="t" style="left:1511px;top:459.27px;font-size:12.2px;line-height:15px;color:#1f2330;-webkit-text-stroke:0.12px #1f2330;">OK</div>
<div class="t" style="left:1677px;top:459.27px;font-size:12.2px;line-height:15px;color:#1f2330;-webkit-text-stroke:0.12px #1f2330;">Tue, Sep 14, 2021 at 10:09 am (U...</div>
<div class="t" style="left:1890px;top:459.27px;font-size:12.2px;line-height:15px;color:#1f2330;-webkit-text-stroke:0.12px #1f2330;">Wed, Sep 15, 2021 at 7:15 am (U...</div>
<div class="t" style="left:2104px;top:459.27px;font-size:12.2px;line-height:15px;color:#1f2330;-webkit-text-stroke:0.12px #1f2330;">-</div>
<div class="t" style="left:2318px;top:457.46px;font-size:12.8px;line-height:15px;color:#0d6a93;letter-spacing:-0.3px;-webkit-text-stroke:0.45px #0d6a93;">Go to</div>
<div class="r" style="left:330px;top:489px;width:530px;height:37px;background:#f1f1f1"></div>
<div class="r" style="left:330px;top:526px;width:2153px;height:1px;background:#dcdcdc"></div>
<div class="r" style="left:340px;top:498px;width:16px;height:16px;border:1.5px solid #666;border-radius:3px;background:#fff;box-sizing:border-box"></div>
<div class="r" style="left:378px;top:503px;width:10px;height:10px;background:#666;border-radius:5px"></div>
<div class="t" style="left:435px;top:501.20px;font-size:12.4px;line-height:15px;color:#1a6fcf;-webkit-text-stroke:0.1px #1a6fcf;">DESKTOP-JSN60AI</div>
<div class="t" style="left:586px;top:501.27px;font-size:12.2px;line-height:15px;color:#3d4045;-webkit-text-stroke:0.12px #3d4045;">DESKTOP-JSN60AI</div>
<svg class="r" style="left:786px;top:498px" width="16" height="17" viewBox="0 0 16 17"><g fill="none" stroke="#0b6bd3" stroke-width="1.2"><path d="M2.9 6.4H1.1V14.2H14.2V6.4H12.4" opacity="0.85"/><path d="M7.6 14.2V16.2M4.6 16.5H11.4" stroke-width="1.3"/></g><path d="M3.2 1.6C6.6 1 9.3 2.6 9.7 6.4H11.2L8 10.3L4.9 6.4H6.8C6.8 4 5.6 2.4 3.2 1.6Z" fill="#0b6bd3"/></svg>
<svg class="r" style="left:808px;top:504px" width="15" height="11" viewBox="0 0 15 11"><g stroke="#0b6bd3" stroke-width="1.5" fill="none"><path d="M0.8 5H12.6" opacity="0.6"/><path d="M9.3 1.2L13.4 5L9.3 8.9"/></g></svg>
<div class="t" style="left:870px;top:501.27px;font-size:12.2px;line-height:15px;color:#111;-webkit-text-stroke:0.12px #111;">-</div>
<div class="t" style="left:967px;top:497.27px;font-size:12.2px;line-height:15px;color:#1f2330;-webkit-text-stroke:0.12px #1f2330;">-</div>
<div class="t" style="left:1132px;top:497.27px;font-size:12.2px;line-height:15px;color:#1f2330;-webkit-text-stroke:0.12px #1f2330;">-</div>
<div class="t" style="left:1298px;top:497.27px;font-size:12.2px;line-height:15px;color:#1f2330;-webkit-text-stroke:0.12px #1f2330;">-</div>
<div class="t" style="left:1511px;top:497.27px;font-size:12.2px;line-height:15px;color:#1f2330;-webkit-text-stroke:0.12px #1f2330;">-</div>
<div class="t" style="left:1677px;top:497.27px;font-size:12.2px;line-height:15px;color:#1f2330;-webkit-text-stroke:0.12px #1f2330;">Not Available (UTC+02:00) Europ...</div>
<div class="t" style="left:1890px;top:497.27px;font-size:12.2px;line-height:15px;color:#1f2330;-webkit-text-stroke:0.12px #1f2330;">Not Available (UTC+02:00) Europ...</div>
<div class="t" style="left:2104px;top:497.27px;font-size:12.2px;line-height:15px;color:#1f2330;-webkit-text-stroke:0.12px #1f2330;">Not Available (UTC+02:00) Europ...</div>
<div class="t" style="left:2318px;top:497.27px;font-size:12.2px;line-height:15px;color:#1f2330;-webkit-text-stroke:0.12px #1f2330;">-</div>
<div class="r" style="left:330px;top:527px;width:530px;height:37px;background:#f1f1f1"></div>
<div class="r" style="left:330px;top:564px;width:2153px;height:1px;background:#dcdcdc"></div>
<div class="r" style="left:340px;top:536px;width:16px;height:16px;border:1.5px solid #666;border-radius:3px;background:#fff;box-sizing:border-box"></div>
<div class="r" style="left:378px;top:541px;width:10px;height:10px;background:#52cf9c;border-radius:5px"></div>
<div class="t" style="left:435px;top:539.20px;font-size:12.4px;line-height:15px;color:#1a6fcf;-webkit-text-stroke:0.1px #1a6fcf;">SPP-WS-1</div>
<div class="t" style="left:586px;top:539.27px;font-size:12.2px;line-height:15px;color:#3d4045;-webkit-text-stroke:0.12px #3d4045;">SPP-WS-1</div>
<svg class="r" style="left:786px;top:536px" width="16" height="17" viewBox="0 0 16 17"><g fill="none" stroke="#0b6bd3" stroke-width="1.2"><path d="M2.9 6.4H1.1V14.2H14.2V6.4H12.4" opacity="0.85"/><path d="M7.6 14.2V16.2M4.6 16.5H11.4" stroke-width="1.3"/></g><path d="M3.2 1.6C6.6 1 9.3 2.6 9.7 6.4H11.2L8 10.3L4.9 6.4H6.8C6.8 4 5.6 2.4 3.2 1.6Z" fill="#0b6bd3"/></svg>
<svg class="r" style="left:808px;top:542px" width="15" height="11" viewBox="0 0 15 11"><g stroke="#0b6bd3" stroke-width="1.5" fill="none"><path d="M0.8 5H12.6" opacity="0.6"/><path d="M9.3 1.2L13.4 5L9.3 8.9"/></g></svg>
<div class="t" style="left:870px;top:539.27px;font-size:12.2px;line-height:15px;color:#111;-webkit-text-stroke:0.12px #111;">-</div>
<div class="t" style="left:967px;top:535.27px;font-size:12.2px;line-height:15px;color:#1f2330;-webkit-text-stroke:0.12px #1f2330;">-</div>
<div class="t" style="left:1132px;top:535.27px;font-size:12.2px;line-height:15px;color:#1f2330;-webkit-text-stroke:0.12px #1f2330;">-</div>
<div class="t" style="left:1298px;top:535.27px;font-size:12.2px;line-height:15px;color:#1f2330;-webkit-text-stroke:0.12px #1f2330;">-</div>
<div class="t" style="left:1511px;top:535.27px;font-size:12.2px;line-height:15px;color:#1f2330;-webkit-text-stroke:0.12px #1f2330;">-</div>
<div class="t" style="left:1677px;top:535.27px;font-size:12.2px;line-height:15px;color:#1f2330;-webkit-text-stroke:0.12px #1f2330;">Not Available (UTC+02:00) Europ...</div>
<div class="t" style="left:1890px;top:535.27px;font-size:12.2px;line-height:15px;color:#1f2330;-webkit-text-stroke:0.12px #1f2330;">Not Available (UTC+02:00) Europ...</div>
<div class="t" style="left:2104px;top:535.27px;font-size:12.2px;line-height:15px;color:#1f2330;-webkit-text-stroke:0.12px #1f2330;">Not Available (UTC+02:00) Europ...</div>
<div class="t" style="left:2318px;top:535.27px;font-size:12.2px;line-height:15px;color:#1f2330;-webkit-text-stroke:0.12px #1f2330;">-</div>
<div class="r" style="left:330px;top:565px;width:530px;height:37px;background:#f1f1f1"></div>
<div class="r" style="left:330px;top:602px;width:2153px;height:1px;background:#dcdcdc"></div>
<div class="r" style="left:340px;top:574px;width:16px;height:16px;border:1.5px solid #666;border-radius:3px;background:#fff;box-sizing:border-box"></div>
<div class="r" style="left:378px;top:579px;width:10px;height:10px;background:#666;border-radius:5px"></div>
<div class="t" style="left:435px;top:577.20px;font-size:12.4px;line-height:15px;color:#1a6fcf;-webkit-text-stroke:0.1px #1a6fcf;">IrinaWIN</div>
<div class="t" style="left:586px;top:577.27px;font-size:12.2px;line-height:15px;color:#3d4045;-webkit-text-stroke:0.12px #3d4045;">IrinaWIN</div>
<svg class="r" style="left:786px;top:574px" width="16" height="17" viewBox="0 0 16 17"><g fill="none" stroke="#0b6bd3" stroke-width="1.2"><path d="M2.9 6.4H1.1V14.2H14.2V6.4H12.4" opacity="0.85"/><path d="M7.6 14.2V16.2M4.6 16.5H11.4" stroke-width="1.3"/></g><path d="M3.2 1.6C6.6 1 9.3 2.6 9.7 6.4H11.2L8 10.3L4.9 6.4H6.8C6.8 4 5.6 2.4 3.2 1.6Z" fill="#0b6bd3"/></svg>
<svg class="r" style="left:808px;top:580px" width="15" height="11" viewBox="0 0 15 11"><g stroke="#0b6bd3" stroke-width="1.5" fill="none"><path d="M0.8 5H12.6" opacity="0.6"/><path d="M9.3 1.2L13.4 5L9.3 8.9"/></g></svg>
<div class="t" style="left:870px;top:577.27px;font-size:12.2px;line-height:15px;color:#111;-webkit-text-stroke:0.12px #111;">-</div>
<div class="t" style="left:967px;top:573.27px;font-size:12.2px;line-height:15px;color:#1f2330;-webkit-text-stroke:0.12px #1f2330;">-</div>
<div class="t" style="left:1132px;top:573.27px;font-size:12.2px;line-height:15px;color:#1f2330;-webkit-text-stroke:0.12px #1f2330;">-</div>
<div class="t" style="left:1298px;top:573.27px;font-size:12.2px;line-height:15px;color:#1f2330;-webkit-text-stroke:0.12px #1f2330;">-</div>
<div class="t" style="left:1511px;top:573.27px;font-size:12.2px;line-height:15px;color:#1f2330;-webkit-text-stroke:0.12px #1f2330;">-</div>
<div class="t" style="left:1677px;top:573.27px;font-size:12.2px;line-height:15px;color:#1f2330;-webkit-text-stroke:0.12px #1f2330;">Not Available (UTC+02:00) Europ...</div>
<div class="t" style="left:1890px;top:573.27px;font-size:12.2px;line-height:15px;color:#1f2330;-webkit-text-stroke:0.12px #1f2330;">Not Available (UTC+02:00) Europ...</div>
<div class="t" style="left:2104px;top:573.27px;font-size:12.2px;line-height:15px;color:#1f2330;-webkit-text-stroke:0.12px #1f2330;">Not Available (UTC+02:00) Europ...</div>
<div class="t" style="left:2318px;top:573.27px;font-size:12.2px;line-height:15px;color:#1f2330;-webkit-text-stroke:0.12px #1f2330;">-</div>
<div class="r" style="left:330px;top:603px;width:530px;height:37px;background:#f1f1f1"></div>
<div class="r" style="left:330px;top:640px;width:2153px;height:1px;background:#dcdcdc"></div>
<div class="r" style="left:340px;top:612px;width:16px;height:16px;border:1.5px solid #666;border-radius:3px;background:#fff;box-sizing:border-box"></div>
<div class="r" style="left:378px;top:617px;width:10px;height:10px;background:#666;border-radius:5px"></div>
<div class="t" style="left:435px;top:615.20px;font-size:12.4px;line-height:15px;color:#1a6fcf;-webkit-text-stroke:0.1px #1a6fcf;">DESKTOP-IPT39QE</div>
<div class="t" style="left:586px;top:615.27px;font-size:12.2px;line-height:15px;color:#3d4045;-webkit-text-stroke:0.12px #3d4045;">DESKTOP-IPT39QE</div>
<svg class="r" style="left:786px;top:612px" width="16" height="17" viewBox="0 0 16 17"><g fill="none" stroke="#0b6bd3" stroke-width="1.2"><path d="M2.9 6.4H1.1V14.2H14.2V6.4H12.4" opacity="0.85"/><path d="M7.6 14.2V16.2M4.6 16.5H11.4" stroke-width="1.3"/></g><path d="M3.2 1.6C6.6 1 9.3 2.6 9.7 6.4H11.2L8 10.3L4.9 6.4H6.8C6.8 4 5.6 2.4 3.2 1.6Z" fill="#0b6bd3"/></svg>
<svg class="r" style="left:808px;top:618px" width="15" height="11" viewBox="0 0 15 11"><g stroke="#0b6bd3" stroke-width="1.5" fill="none"><path d="M0.8 5H12.6" opacity="0.6"/><path d="M9.3 1.2L13.4 5L9.3 8.9"/></g></svg>
<div class="t" style="left:870px;top:615.27px;font-size:12.2px;line-height:15px;color:#111;-webkit-text-stroke:0.12px #111;">-</div>
<div class="t" style="left:967px;top:611.27px;font-size:12.2px;line-height:15px;color:#1f2330;-webkit-text-stroke:0.12px #1f2330;">-</div>
<div class="t" style="left:1132px;top:611.27px;font-size:12.2px;line-height:15px;color:#1f2330;-webkit-text-stroke:0.12px #1f2330;">-</div>
<div class="t" style="left:1298px;top:611.27px;font-size:12.2px;line-height:15px;color:#1f2330;-webkit-text-stroke:0.12px #1f2330;">-</div>
<div class="t" style="left:1511px;top:611.27px;font-size:12.2px;line-height:15px;color:#1f2330;-webkit-text-stroke:0.12px #1f2330;">-</div>
<div class="t" style="left:1677px;top:611.27px;font-size:12.2px;line-height:15px;color:#1f2330;-webkit-text-stroke:0.12px #1f2330;">Not Available (UTC+02:00) Europ...</div>
<div class="t" style="left:1890px;top:611.27px;font-size:12.2px;line-height:15px;color:#1f2330;-webkit-text-stroke:0.12px #1f2330;">Not Available (UTC+02:00) Europ...</div>
<div class="t" style="left:2104px;top:611.27px;font-size:12.2px;line-height:15px;color:#1f2330;-webkit-text-stroke:0.12px #1f2330;">-</div>
<div class="t" style="left:2318px;top:611.27px;font-size:12.2px;line-height:15px;color:#1f2330;-webkit-text-stroke:0.12px #1f2330;">-</div>
<div class="r" style="left:330px;top:641px;width:530px;height:37px;background:#f1f1f1"></div>
<div class="r" style="left:330px;top:678px;width:2153px;height:1px;background:#dcdcdc"></div>
<div class="r" style="left:340px;top:650px;width:16px;height:16px;border:1.5px solid #666;border-radius:3px;background:#fff;box-sizing:border-box"></div>
<div class="r" style="left:378px;top:655px;width:10px;height:10px;background:#666;border-radius:5px"></div>
<div class="t" style="left:435px;top:653.20px;font-size:12.4px;line-height:15px;color:#1a6fcf;-webkit-text-stroke:0.1px #1a6fcf;">SPP-WS-2</div>
<div class="t" style="left:586px;top:653.27px;font-size:12.2px;line-height:15px;color:#3d4045;-webkit-text-stroke:0.12px #3d4045;">SPP-WS-2</div>
<svg class="r" style="left:786px;top:650px" width="16" height="17" viewBox="0 0 16 17"><g fill="none" stroke="#0b6bd3" stroke-width="1.2"><path d="M2.9 6.4H1.1V14.2H14.2V6.4H12.4" opacity="0.85"/><path d="M7.6 14.2V16.2M4.6 16.5H11.4" stroke-width="1.3"/></g><path d="M3.2 1.6C6.6 1 9.3 2.6 9.7 6.4H11.2L8 10.3L4.9 6.4H6.8C6.8 4 5.6 2.4 3.2 1.6Z" fill="#0b6bd3"/></svg>
<svg class="r" style="left:808px;top:656px" width="15" height="11" viewBox="0 0 15 11"><g stroke="#0b6bd3" stroke-width="1.5" fill="none"><path d="M0.8 5H12.6" opacity="0.6"/><path d="M9.3 1.2L13.4 5L9.3 8.9"/></g></svg>
<div class="t" style="left:870px;top:653.27px;font-size:12.2px;line-height:15px;color:#111;-webkit-text-stroke:0.12px #111;">-</div>
<div class="t" style="left:967px;top:649.27px;font-size:12.2px;line-height:15px;color:#1f2330;-webkit-text-stroke:0.12px #1f2330;">-</div>
<div class="t" style="left:1132px;top:649.27px;font-size:12.2px;line-height:15px;color:#1f2330;-webkit-text-stroke:0.12px #1f2330;">-</div>
<div class="t" style="left:1298px;top:649.27px;font-size:12.2px;line-height:15px;color:#1f2330;-webkit-text-stroke:0.12px #1f2330;">-</div>
<div class="t" style="left:1511px;top:649.27px;font-size:12.2px;line-height:15px;color:#1f2330;-webkit-text-stroke:0.12px #1f2330;">-</div>
<div class="t" style="left:1677px;top:649.27px;font-size:12.2px;line-height:15px;color:#1f2330;-webkit-text-stroke:0.12px #1f2330;">Not Available (UTC+02:00) Europ...</div>
<div class="t" style="left:1890px;top:649.27px;font-size:12.2px;line-height:15px;color:#1f2330;-webkit-text-stroke:0.12px #1f2330;">Not Available (UTC+02:00) Europ...</div>
<div class="t" style="left:2104px;top:649.27px;font-size:12.2px;line-height:15px;color:#1f2330;-webkit-text-stroke:0.12px #1f2330;">Not Available (UTC+02:00) Europ...</div>
<div class="t" style="left:2318px;top:649.27px;font-size:12.2px;line-height:15px;color:#1f2330;-webkit-text-stroke:0.12px #1f2330;">-</div>
<div class="r" style="left:330px;top:679px;width:530px;height:37px;background:#f1f1f1"></div>
<div class="r" style="left:330px;top:716px;width:2153px;height:1px;background:#dcdcdc"></div>
<div class="r" style="left:340px;top:688px;width:16px;height:16px;border:1.5px solid #666;border-radius:3px;background:#fff;box-sizing:border-box"></div>
<div class="r" style="left:378px;top:693px;width:10px;height:10px;background:#666;border-radius:5px"></div>
<div class="t" style="left:435px;top:691.20px;font-size:12.4px;line-height:15px;color:#1a6fcf;-webkit-text-stroke:0.1px #1a6fcf;">WinDev2108Eval</div>
<div class="t" style="left:586px;top:691.27px;font-size:12.2px;line-height:15px;color:#3d4045;-webkit-text-stroke:0.12px #3d4045;">WinDev2108Eval</div>
<svg class="r" style="left:786px;top:688px" width="16" height="17" viewBox="0 0 16 17"><g fill="none" stroke="#0b6bd3" stroke-width="1.2"><path d="M2.9 6.4H1.1V14.2H14.2V6.4H12.4" opacity="0.85"/><path d="M7.6 14.2V16.2M4.6 16.5H11.4" stroke-width="1.3"/></g><path d="M3.2 1.6C6.6 1 9.3 2.6 9.7 6.4H11.2L8 10.3L4.9 6.4H6.8C6.8 4 5.6 2.4 3.2 1.6Z" fill="#0b6bd3"/></svg>
<svg class="r" style="left:808px;top:694px" width="15" height="11" viewBox="0 0 15 11"><g stroke="#0b6bd3" stroke-width="1.5" fill="none"><path d="M0.8 5H12.6" opacity="0.6"/><path d="M9.3 1.2L13.4 5L9.3 8.9"/></g></svg>
<div class="t" style="left:870px;top:691.27px;font-size:12.2px;line-height:15px;color:#111;-webkit-text-stroke:0.12px #111;">-</div>
<div class="t" style="left:967px;top:687.27px;font-size:12.2px;line-height:15px;color:#1f2330;-webkit-text-stroke:0.12px #1f2330;">-</div>
<div class="t" style="left:1132px;top:687.27px;font-size:12.2px;line-height:15px;color:#1f2330;-webkit-text-stroke:0.12px #1f2330;">-</div>
<div class="t" style="left:1298px;top:687.27px;font-size:12.2px;line-height:15px;color:#1f2330;-webkit-text-stroke:0.12px #1f2330;">-</div>
<div class="t" style="left:1511px;top:687.27px;font-size:12.2px;line-height:15px;color:#1f2330;-webkit-text-stroke:0.12px #1f2330;">-</div>
<div class="t" style="left:1677px;top:687.27px;font-size:12.2px;line-height:15px;color:#1f2330;-webkit-text-stroke:0.12px #1f2330;">Not Available (UTC+02:00) Europ...</div>
<div class="t" style="left:1890px;top:687.27px;font-size:12.2px;line-height:15px;color:#1f2330;-webkit-text-stroke:0.12px #1f2330;">Not Available (UTC+02:00) Europ...</div>
<div class="t" style="left:2104px;top:687.27px;font-size:12.2px;line-height:15px;color:#1f2330;-webkit-text-stroke:0.12px #1f2330;">-</div>
<div class="t" style="left:2318px;top:687.27px;font-size:12.2px;line-height:15px;color:#1f2330;-webkit-text-stroke:0.12px #1f2330;">-</div>
<div class="r" style="left:330px;top:717px;width:530px;height:37px;background:#f1f1f1"></div>
<div class="r" style="left:330px;top:754px;width:2153px;height:1px;background:#dcdcdc"></div>
<div class="r" style="left:340px;top:726px;width:16px;height:16px;border:1.5px solid #666;border-radius:3px;background:#fff;box-sizing:border-box"></div>
<div class="r" style="left:378px;top:731px;width:10px;height:10px;background:#666;border-radius:5px"></div>
<div class="t" style="left:435px;top:729.20px;font-size:12.4px;line-height:15px;color:#1a6fcf;-webkit-text-stroke:0.1px #1a6fcf;">DESKTOP-ENAE8DA</div>
<div class="t" style="left:586px;top:729.27px;font-size:12.2px;line-height:15px;color:#3d4045;-webkit-text-stroke:0.12px #3d4045;">DESKTOP-ENAE8DA</div>
<svg class="r" style="left:786px;top:726px" width="16" height="17" viewBox="0 0 16 17"><g fill="none" stroke="#3d4a52" stroke-width="1.2"><path d="M2.9 6.4H1.1V14.2H14.2V6.4H12.4" opacity="0.85"/><path d="M7.6 14.2V16.2M4.6 16.5H11.4" stroke-width="1.3"/></g><path d="M3.2 1.6C6.6 1 9.3 2.6 9.7 6.4H11.2L8 10.3L4.9 6.4H6.8C6.8 4 5.6 2.4 3.2 1.6Z" fill="#3d4a52"/><path d="M1 16.5L15.5 1" stroke="#3d4a52" stroke-width="1.4"/></svg>
<svg class="r" style="left:808px;top:732px" width="15" height="11" viewBox="0 0 15 11"><g stroke="#0b6bd3" stroke-width="1.5" fill="none"><path d="M0.8 5H12.6" opacity="0.6"/><path d="M9.3 1.2L13.4 5L9.3 8.9"/></g></svg>
<div class="t" style="left:870px;top:729.27px;font-size:12.2px;line-height:15px;color:#111;-webkit-text-stroke:0.12px #111;">-</div>
<div class="t" style="left:967px;top:725.27px;font-size:12.2px;line-height:15px;color:#1f2330;-webkit-text-stroke:0.12px #1f2330;">-</div>
<div class="t" style="left:1132px;top:725.27px;font-size:12.2px;line-height:15px;color:#1f2330;-webkit-text-stroke:0.12px #1f2330;">-</div>
<div class="t" style="left:1298px;top:725.27px;font-size:12.2px;line-height:15px;color:#1f2330;-webkit-text-stroke:0.12px #1f2330;">-</div>
<div class="t" style="left:1511px;top:725.27px;font-size:12.2px;line-height:15px;color:#1f2330;-webkit-text-stroke:0.12px #1f2330;">-</div>
<div class="t" style="left:1677px;top:725.27px;font-size:12.2px;line-height:15px;color:#1f2330;-webkit-text-stroke:0.12px #1f2330;">Not Available (UTC+02:00) Europ...</div>
<div class="t" style="left:1890px;top:725.27px;font-size:12.2px;line-height:15px;color:#1f2330;-webkit-text-stroke:0.12px #1f2330;">Not Available (UTC+02:00) Europ...</div>
<div class="t" style="left:2104px;top:725.27px;font-size:12.2px;line-height:15px;color:#1f2330;-webkit-text-stroke:0.12px #1f2330;">-</div>
<div class="t" style="left:2318px;top:725.27px;font-size:12.2px;line-height:15px;color:#1f2330;-webkit-text-stroke:0.12px #1f2330;">-</div>
<div class="r" style="left:330px;top:755px;width:530px;height:37px;background:#f1f1f1"></div>
<div class="r" style="left:330px;top:792px;width:2153px;height:1px;background:#dcdcdc"></div>
<div class="r" style="left:340px;top:764px;width:16px;height:16px;border:1.5px solid #666;border-radius:3px;background:#fff;box-sizing:border-box"></div>
<div class="r" style="left:378px;top:769px;width:10px;height:10px;background:#52cf9c;border-radius:5px"></div>
<div class="t" style="left:435px;top:767.20px;font-size:12.4px;line-height:15px;color:#1a6fcf;-webkit-text-stroke:0.1px #1a6fcf;">SPP-WS-3</div>
<div class="t" style="left:586px;top:767.27px;font-size:12.2px;line-height:15px;color:#3d4045;-webkit-text-stroke:0.12px #3d4045;">SPP-WS-3</div>
<svg class="r" style="left:786px;top:764px" width="16" height="17" viewBox="0 0 16 17"><g fill="none" stroke="#0b6bd3" stroke-width="1.2"><path d="M2.9 6.4H1.1V14.2H14.2V6.4H12.4" opacity="0.85"/><path d="M7.6 14.2V16.2M4.6 16.5H11.4" stroke-width="1.3"/></g><path d="M3.2 1.6C6.6 1 9.3 2.6 9.7 6.4H11.2L8 10.3L4.9 6.4H6.8C6.8 4 5.6 2.4 3.2 1.6Z" fill="#0b6bd3"/></svg>
<svg class="r" style="left:808px;top:770px" width="15" height="11" viewBox="0 0 15 11"><g stroke="#0b6bd3" stroke-width="1.5" fill="none"><path d="M0.8 5H12.6" opacity="0.6"/><path d="M9.3 1.2L13.4 5L9.3 8.9"/></g></svg>
<div class="t" style="left:870px;top:767.27px;font-size:12.2px;line-height:15px;color:#111;-webkit-text-stroke:0.12px #111;">-</div>
<div class="t" style="left:967px;top:763.27px;font-size:12.2px;line-height:15px;color:#1f2330;-webkit-text-stroke:0.12px #1f2330;">-</div>
<div class="t" style="left:1132px;top:763.27px;font-size:12.2px;line-height:15px;color:#1f2330;-webkit-text-stroke:0.12px #1f2330;">-</div>
<div class="t" style="left:1298px;top:763.27px;font-size:12.2px;line-height:15px;color:#1f2330;-webkit-text-stroke:0.12px #1f2330;">-</div>
<div class="t" style="left:1511px;top:763.27px;font-size:12.2px;line-height:15px;color:#1f2330;-webkit-text-stroke:0.12px #1f2330;">-</div>
<div class="t" style="left:1677px;top:763.27px;font-size:12.2px;line-height:15px;color:#1f2330;-webkit-text-stroke:0.12px #1f2330;">Not Available (UTC+02:00) Europ...</div>
<div class="t" style="left:1890px;top:763.27px;font-size:12.2px;line-height:15px;color:#1f2330;-webkit-text-stroke:0.12px #1f2330;">Not Available (UTC+02:00) Europ...</div>
<div class="t" style="left:2104px;top:763.27px;font-size:12.2px;line-height:15px;color:#1f2330;-webkit-text-stroke:0.12px #1f2330;">Not Available (UTC+02:00) Europ...</div>
<div class="t" style="left:2318px;top:763.27px;font-size:12.2px;line-height:15px;color:#1f2330;-webkit-text-stroke:0.12px #1f2330;">-</div>
<div class="r" style="left:330px;top:793px;width:530px;height:37px;background:#f1f1f1"></div>
<div class="r" style="left:330px;top:830px;width:2153px;height:1px;background:#dcdcdc"></div>
<div class="r" style="left:340px;top:802px;width:16px;height:16px;border:1.5px solid #666;border-radius:3px;background:#fff;box-sizing:border-box"></div>
<div class="r" style="left:378px;top:807px;width:10px;height:10px;background:#666;border-radius:5px"></div>
<div class="t" style="left:435px;top:805.20px;font-size:12.4px;line-height:15px;color:#1a6fcf;-webkit-text-stroke:0.1px #1a6fcf;">Virtual-PC</div>
<div class="t" style="left:586px;top:805.27px;font-size:12.2px;line-height:15px;color:#3d4045;-webkit-text-stroke:0.12px #3d4045;">Virtual-PC</div>
<svg class="r" style="left:786px;top:802px" width="16" height="17" viewBox="0 0 16 17"><g fill="none" stroke="#0b6bd3" stroke-width="1.2"><path d="M2.9 6.4H1.1V14.2H14.2V6.4H12.4" opacity="0.85"/><path d="M7.6 14.2V16.2M4.6 16.5H11.4" stroke-width="1.3"/></g><path d="M3.2 1.6C6.6 1 9.3 2.6 9.7 6.4H11.2L8 10.3L4.9 6.4H6.8C6.8 4 5.6 2.4 3.2 1.6Z" fill="#0b6bd3"/></svg>
<svg class="r" style="left:808px;top:808px" width="15" height="11" viewBox="0 0 15 11"><g stroke="#0b6bd3" stroke-width="1.5" fill="none"><path d="M0.8 5H12.6" opacity="0.6"/><path d="M9.3 1.2L13.4 5L9.3 8.9"/></g></svg>
<div class="t" style="left:870px;top:805.27px;font-size:12.2px;line-height:15px;color:#111;-webkit-text-stroke:0.12px #111;">-</div>
<div class="t" style="left:967px;top:801.27px;font-size:12.2px;line-height:15px;color:#1f2330;-webkit-text-stroke:0.12px #1f2330;">-</div>
<div class="t" style="left:1132px;top:801.27px;font-size:12.2px;line-height:15px;color:#1f2330;-webkit-text-stroke:0.12px #1f2330;">-</div>
<div class="t" style="left:1298px;top:801.27px;font-size:12.2px;line-height:15px;color:#1f2330;-webkit-text-stroke:0.12px #1f2330;">-</div>
<div class="t" style="left:1511px;top:801.27px;font-size:12.2px;line-height:15px;color:#1f2330;-webkit-text-stroke:0.12px #1f2330;">-</div>
<div class="t" style="left:1677px;top:801.27px;font-size:12.2px;line-height:15px;color:#1f2330;-webkit-text-stroke:0.12px #1f2330;">Not Available (UTC+02:00) Europ...</div>
<div class="t" style="left:1890px;top:801.27px;font-size:12.2px;line-height:15px;color:#1f2330;-webkit-text-stroke:0.12px #1f2330;">Not Available (UTC+02:00) Europ...</div>
<div class="t" style="left:2104px;top:801.27px;font-size:12.2px;line-height:15px;color:#1f2330;-webkit-text-stroke:0.12px #1f2330;">Not Available (UTC+02:00) Europ...</div>
<div class="t" style="left:2318px;top:801.27px;font-size:12.2px;line-height:15px;color:#1f2330;-webkit-text-stroke:0.12px #1f2330;">-</div>
<div class="r" style="left:330px;top:831px;width:530px;height:37px;background:#f1f1f1"></div>
<div class="r" style="left:330px;top:868px;width:2153px;height:1px;background:#dcdcdc"></div>
<div class="r" style="left:340px;top:840px;width:16px;height:16px;border:1.5px solid #666;border-radius:3px;background:#fff;box-sizing:border-box"></div>
<div class="r" style="left:378px;top:845px;width:10px;height:10px;background:#666;border-radius:5px"></div>
<div class="t" style="left:435px;top:843.20px;font-size:12.4px;line-height:15px;color:#1a6fcf;-webkit-text-stroke:0.1px #1a6fcf;">SPP-WS-3</div>
<div class="t" style="left:586px;top:843.27px;font-size:12.2px;line-height:15px;color:#3d4045;-webkit-text-stroke:0.12px #3d4045;">SPP-WS-3</div>
<svg class="r" style="left:786px;top:840px" width="16" height="17" viewBox="0 0 16 17"><g fill="none" stroke="#0b6bd3" stroke-width="1.2"><path d="M2.9 6.4H1.1V14.2H14.2V6.4H12.4" opacity="0.85"/><path d="M7.6 14.2V16.2M4.6 16.5H11.4" stroke-width="1.3"/></g><path d="M3.2 1.6C6.6 1 9.3 2.6 9.7 6.4H11.2L8 10.3L4.9 6.4H6.8C6.8 4 5.6 2.4 3.2 1.6Z" fill="#0b6bd3"/></svg>
<svg class="r" style="left:808px;top:846px" width="15" height="11" viewBox="0 0 15 11"><g stroke="#0b6bd3" stroke-width="1.5" fill="none"><path d="M0.8 5H12.6" opacity="0.6"/><path d="M9.3 1.2L13.4 5L9.3 8.9"/></g></svg>
<div class="t" style="left:870px;top:843.27px;font-size:12.2px;line-height:15px;color:#111;-webkit-text-stroke:0.12px #111;">-</div>
<div class="t" style="left:967px;top:839.27px;font-size:12.2px;line-height:15px;color:#1f2330;-webkit-text-stroke:0.12px #1f2330;">-</div>
<div class="t" style="left:1132px;top:839.27px;font-size:12.2px;line-height:15px;color:#1f2330;-webkit-text-stroke:0.12px #1f2330;">-</div>
<div class="t" style="left:1298px;top:839.27px;font-size:12.2px;line-height:15px;color:#1f2330;-webkit-text-stroke:0.12px #1f2330;">-</div>
<div class="t" style="left:1511px;top:839.27px;font-size:12.2px;line-height:15px;color:#1f2330;-webkit-text-stroke:0.12px #1f2330;">-</div>
<div class="t" style="left:1677px;top:839.27px;font-size:12.2px;line-height:15px;color:#1f2330;-webkit-text-stroke:0.12px #1f2330;">-</div>
<div class="t" style="left:1890px;top:839.27px;font-size:12.2px;line-height:15px;color:#1f2330;-webkit-text-stroke:0.12px #1f2330;">-</div>
<div class="t" style="left:2104px;top:839.27px;font-size:12.2px;line-height:15px;color:#1f2330;-webkit-text-stroke:0.12px #1f2330;">-</div>
<div class="t" style="left:2318px;top:839.27px;font-size:12.2px;line-height:15px;color:#1f2330;-webkit-text-stroke:0.12px #1f2330;">-</div>
<div class="r" style="left:330px;top:869px;width:530px;height:37px;background:#f1f1f1"></div>
<div class="r" style="left:330px;top:906px;width:2153px;height:1px;background:#dcdcdc"></div>
<div class="r" style="left:340px;top:878px;width:16px;height:16px;border:1.5px solid #666;border-radius:3px;background:#fff;box-sizing:border-box"></div>
<div class="r" style="left:378px;top:883px;width:10px;height:10px;background:#666;border-radius:5px"></div>
<div class="t" style="left:435px;top:881.20px;font-size:12.4px;line-height:15px;color:#1a6fcf;-webkit-text-stroke:0.1px #1a6fcf;">DESKTOP-6D9PCGU</div>
<div class="t" style="left:586px;top:881.27px;font-size:12.2px;line-height:15px;color:#3d4045;-webkit-text-stroke:0.12px #3d4045;">DESKTOP-6D9PCGU</div>
<svg class="r" style="left:786px;top:878px" width="16" height="17" viewBox="0 0 16 17"><g fill="none" stroke="#0b6bd3" stroke-width="1.2"><path d="M2.9 6.4H1.1V14.2H14.2V6.4H12.4" opacity="0.85"/><path d="M7.6 14.2V16.2M4.6 16.5H11.4" stroke-width="1.3"/></g><path d="M3.2 1.6C6.6 1 9.3 2.6 9.7 6.4H11.2L8 10.3L4.9 6.4H6.8C6.8 4 5.6 2.4 3.2 1.6Z" fill="#0b6bd3"/></svg>
<svg class="r" style="left:808px;top:884px" width="15" height="11" viewBox="0 0 15 11"><g stroke="#0b6bd3" stroke-width="1.5" fill="none"><path d="M0.8 5H12.6" opacity="0.6"/><path d="M9.3 1.2L13.4 5L9.3 8.9"/></g></svg>
<div class="t" style="left:870px;top:881.27px;font-size:12.2px;line-height:15px;color:#111;-webkit-text-stroke:0.12px #111;">-</div>
<div class="t" style="left:967px;top:877.27px;font-size:12.2px;line-height:15px;color:#1f2330;-webkit-text-stroke:0.12px #1f2330;">-</div>
<div class="t" style="left:1132px;top:877.27px;font-size:12.2px;line-height:15px;color:#1f2330;-webkit-text-stroke:0.12px #1f2330;">-</div>
<div class="t" style="left:1298px;top:877.27px;font-size:12.2px;line-height:15px;color:#1f2330;-webkit-text-stroke:0.12px #1f2330;">-</div>
<div class="t" style="left:1511px;top:877.27px;font-size:12.2px;line-height:15px;color:#1f2330;-webkit-text-stroke:0.12px #1f2330;">-</div>
<div class="t" style="left:1677px;top:877.27px;font-size:12.2px;line-height:15px;color:#1f2330;-webkit-text-stroke:0.12px #1f2330;">-</div>
<div class="t" style="left:1890px;top:877.27px;font-size:12.2px;line-height:15px;color:#1f2330;-webkit-text-stroke:0.12px #1f2330;">-</div>
<div class="t" style="left:2104px;top:877.27px;font-size:12.2px;line-height:15px;color:#1f2330;-webkit-text-stroke:0.12px #1f2330;">-</div>
<div class="t" style="left:2318px;top:877.27px;font-size:12.2px;line-height:15px;color:#1f2330;-webkit-text-stroke:0.12px #1f2330;">-</div>
<div class="r" style="left:330px;top:907px;width:530px;height:37px;background:#f1f1f1"></div>
<div class="r" style="left:330px;top:944px;width:2153px;height:1px;background:#dcdcdc"></div>
<div class="r" style="left:340px;top:916px;width:16px;height:16px;border:1.5px solid #666;border-radius:3px;background:#fff;box-sizing:border-box"></div>
<div class="r" style="left:378px;top:921px;width:10px;height:10px;background:#666;border-radius:5px"></div>
<div class="t" style="left:435px;top:919.20px;font-size:12.4px;line-height:15px;color:#1a6fcf;-webkit-text-stroke:0.1px #1a6fcf;">SPP-WS-3</div>
<div class="t" style="left:586px;top:919.27px;font-size:12.2px;line-height:15px;color:#3d4045;-webkit-text-stroke:0.12px #3d4045;">SPP-WS-3</div>
<svg class="r" style="left:786px;top:916px" width="16" height="17" viewBox="0 0 16 17"><g fill="none" stroke="#0b6bd3" stroke-width="1.2"><path d="M2.9 6.4H1.1V14.2H14.2V6.4H12.4" opacity="0.85"/><path d="M7.6 14.2V16.2M4.6 16.5H11.4" stroke-width="1.3"/></g><path d="M3.2 1.6C6.6 1 9.3 2.6 9.7 6.4H11.2L8 10.3L4.9 6.4H6.8C6.8 4 5.6 2.4 3.2 1.6Z" fill="#0b6bd3"/></svg>
<svg class="r" style="left:808px;top:922px" width="15" height="11" viewBox="0 0 15 11"><g stroke="#0b6bd3" stroke-width="1.5" fill="none"><path d="M0.8 5H12.6" opacity="0.6"/><path d="M9.3 1.2L13.4 5L9.3 8.9"/></g></svg>
<div class="t" style="left:870px;top:919.27px;font-size:12.2px;line-height:15px;color:#111;-webkit-text-stroke:0.12px #111;">-</div>
<div class="t" style="left:967px;top:915.27px;font-size:12.2px;line-height:15px;color:#1f2330;-webkit-text-stroke:0.12px #1f2330;">-</div>
<div class="t" style="left:1132px;top:915.27px;font-size:12.2px;line-height:15px;color:#1f2330;-webkit-text-stroke:0.12px #1f2330;">-</div>
<div class="t" style="left:1298px;top:915.27px;font-size:12.2px;line-height:15px;color:#1f2330;-webkit-text-stroke:0.12px #1f2330;">-</div>
<div class="t" style="left:1511px;top:915.27px;font-size:12.2px;line-height:15px;color:#1f2330;-webkit-text-stroke:0.12px #1f2330;">-</div>
<div class="t" style="left:1677px;top:915.27px;font-size:12.2px;line-height:15px;color:#1f2330;-webkit-text-stroke:0.12px #1f2330;">-</div>
<div class="t" style="left:1890px;top:915.27px;font-size:12.2px;line-height:15px;color:#1f2330;-webkit-text-stroke:0.12px #1f2330;">-</div>
<div class="t" style="left:2104px;top:915.27px;font-size:12.2px;line-height:15px;color:#1f2330;-webkit-text-stroke:0.12px #1f2330;">-</div>
<div class="t" style="left:2318px;top:915.27px;font-size:12.2px;line-height:15px;color:#1f2330;-webkit-text-stroke:0.12px #1f2330;">-</div>
<div class="r" style="left:330px;top:945px;width:530px;height:37px;background:#f1f1f1"></div>
<div class="r" style="left:330px;top:982px;width:2153px;height:1px;background:#dcdcdc"></div>
<div class="r" style="left:340px;top:954px;width:16px;height:16px;border:1.5px solid #666;border-radius:3px;background:#fff;box-sizing:border-box"></div>
<div class="r" style="left:378px;top:959px;width:10px;height:10px;background:#666;border-radius:5px"></div>
<div class="t" style="left:435px;top:957.20px;font-size:12.4px;line-height:15px;color:#1a6fcf;-webkit-text-stroke:0.1px #1a6fcf;">SPP-WS-3</div>
<div class="t" style="left:586px;top:957.27px;font-size:12.2px;line-height:15px;color:#3d4045;-webkit-text-stroke:0.12px #3d4045;">SPP-WS-3</div>
<svg class="r" style="left:786px;top:954px" width="16" height="17" viewBox="0 0 16 17"><g fill="none" stroke="#0b6bd3" stroke-width="1.2"><path d="M2.9 6.4H1.1V14.2H14.2V6.4H12.4" opacity="0.85"/><path d="M7.6 14.2V16.2M4.6 16.5H11.4" stroke-width="1.3"/></g><path d="M3.2 1.6C6.6 1 9.3 2.6 9.7 6.4H11.2L8 10.3L4.9 6.4H6.8C6.8 4 5.6 2.4 3.2 1.6Z" fill="#0b6bd3"/></svg>
<svg class="r" style="left:808px;top:960px" width="15" height="11" viewBox="0 0 15 11"><g stroke="#0b6bd3" stroke-width="1.5" fill="none"><path d="M0.8 5H12.6" opacity="0.6"/><path d="M9.3 1.2L13.4 5L9.3 8.9"/></g></svg>
<div class="t" style="left:870px;top:957.27px;font-size:12.2px;line-height:15px;color:#111;-webkit-text-stroke:0.12px #111;">-</div>
<div class="t" style="left:967px;top:953.27px;font-size:12.2px;line-height:15px;color:#1f2330;-webkit-text-stroke:0.12px #1f2330;">-</div>
<div class="t" style="left:1132px;top:953.27px;font-size:12.2px;line-height:15px;color:#1f2330;-webkit-text-stroke:0.12px #1f2330;">-</div>
<div class="t" style="left:1298px;top:953.27px;font-size:12.2px;line-height:15px;color:#1f2330;-webkit-text-stroke:0.12px #1f2330;">-</div>
<div class="t" style="left:1511px;top:953.27px;font-size:12.2px;line-height:15px;color:#1f2330;-webkit-text-stroke:0.12px #1f2330;">-</div>
<div class="t" style="left:1677px;top:953.27px;font-size:12.2px;line-height:15px;color:#1f2330;-webkit-text-stroke:0.12px #1f2330;">-</div>
<div class="t" style="left:1890px;top:953.27px;font-size:12.2px;line-height:15px;color:#1f2330;-webkit-text-stroke:0.12px #1f2330;">-</div>
<div class="t" style="left:2104px;top:953.27px;font-size:12.2px;line-height:15px;color:#1f2330;-webkit-text-stroke:0.12px #1f2330;">-</div>
<div class="t" style="left:2318px;top:953.27px;font-size:12.2px;line-height:15px;color:#1f2330;-webkit-text-stroke:0.12px #1f2330;">-</div>
<div class="r" style="left:330px;top:983px;width:530px;height:37px;background:#f1f1f1"></div>
<div class="r" style="left:330px;top:1020px;width:2153px;height:1px;background:#dcdcdc"></div>
<div class="r" style="left:340px;top:992px;width:16px;height:16px;border:1.5px solid #666;border-radius:3px;background:#fff;box-sizing:border-box"></div>
<div class="r" style="left:378px;top:997px;width:10px;height:10px;background:#666;border-radius:5px"></div>
<div class="t" style="left:435px;top:995.20px;font-size:12.4px;line-height:15px;color:#1a6fcf;-webkit-text-stroke:0.1px #1a6fcf;">SPP-WS-3</div>
<div class="t" style="left:586px;top:995.27px;font-size:12.2px;line-height:15px;color:#3d4045;-webkit-text-stroke:0.12px #3d4045;">SPP-WS-3</div>
<svg class="r" style="left:786px;top:992px" width="16" height="17" viewBox="0 0 16 17"><g fill="none" stroke="#0b6bd3" stroke-width="1.2"><path d="M2.9 6.4H1.1V14.2H14.2V6.4H12.4" opacity="0.85"/><path d="M7.6 14.2V16.2M4.6 16.5H11.4" stroke-width="1.3"/></g><path d="M3.2 1.6C6.6 1 9.3 2.6 9.7 6.4H11.2L8 10.3L4.9 6.4H6.8C6.8 4 5.6 2.4 3.2 1.6Z" fill="#0b6bd3"/></svg>
<svg class="r" style="left:808px;top:998px" width="15" height="11" viewBox="0 0 15 11"><g stroke="#0b6bd3" stroke-width="1.5" fill="none"><path d="M0.8 5H12.6" opacity="0.6"/><path d="M9.3 1.2L13.4 5L9.3 8.9"/></g></svg>
<div class="t" style="left:870px;top:995.27px;font-size:12.2px;line-height:15px;color:#111;-webkit-text-stroke:0.12px #111;">-</div>
<div class="t" style="left:967px;top:991.27px;font-size:12.2px;line-height:15px;color:#1f2330;-webkit-text-stroke:0.12px #1f2330;">-</div>
<div class="t" style="left:1132px;top:991.27px;font-size:12.2px;line-height:15px;color:#1f2330;-webkit-text-stroke:0.12px #1f2330;">-</div>
<div class="t" style="left:1298px;top:991.27px;font-size:12.2px;line-height:15px;color:#1f2330;-webkit-text-stroke:0.12px #1f2330;">-</div>
<div class="t" style="left:1511px;top:991.27px;font-size:12.2px;line-height:15px;color:#1f2330;-webkit-text-stroke:0.12px #1f2330;">-</div>
<div class="t" style="left:1677px;top:991.27px;font-size:12.2px;line-height:15px;color:#1f2330;-webkit-text-stroke:0.12px #1f2330;">-</div>
<div class="t" style="left:1890px;top:991.27px;font-size:12.2px;line-height:15px;color:#1f2330;-webkit-text-stroke:0.12px #1f2330;">-</div>
<div class="t" style="left:2104px;top:991.27px;font-size:12.2px;line-height:15px;color:#1f2330;-webkit-text-stroke:0.12px #1f2330;">-</div>
<div class="t" style="left:2318px;top:991.27px;font-size:12.2px;line-height:15px;color:#1f2330;-webkit-text-stroke:0.12px #1f2330;">-</div>
<div class="r" style="left:330px;top:1021px;width:530px;height:37px;background:#f1f1f1"></div>
<div class="r" style="left:330px;top:1058px;width:2153px;height:1px;background:#dcdcdc"></div>
<div class="r" style="left:340px;top:1030px;width:16px;height:16px;border:1.5px solid #666;border-radius:3px;background:#fff;box-sizing:border-box"></div>
<div class="r" style="left:378px;top:1035px;width:10px;height:10px;background:#666;border-radius:5px"></div>
<div class="t" style="left:435px;top:1033.20px;font-size:12.4px;line-height:15px;color:#1a6fcf;-webkit-text-stroke:0.1px #1a6fcf;">SPP-WS-3</div>
<div class="t" style="left:586px;top:1033.27px;font-size:12.2px;line-height:15px;color:#3d4045;-webkit-text-stroke:0.12px #3d4045;">SPP-WS-3</div>
<svg class="r" style="left:786px;top:1030px" width="16" height="17" viewBox="0 0 16 17"><g fill="none" stroke="#0b6bd3" stroke-width="1.2"><path d="M2.9 6.4H1.1V14.2H14.2V6.4H12.4" opacity="0.85"/><path d="M7.6 14.2V16.2M4.6 16.5H11.4" stroke-width="1.3"/></g><path d="M3.2 1.6C6.6 1 9.3 2.6 9.7 6.4H11.2L8 10.3L4.9 6.4H6.8C6.8 4 5.6 2.4 3.2 1.6Z" fill="#0b6bd3"/></svg>
<svg class="r" style="left:808px;top:1036px" width="15" height="11" viewBox="0 0 15 11"><g stroke="#0b6bd3" stroke-width="1.5" fill="none"><path d="M0.8 5H12.6" opacity="0.6"/><path d="M9.3 1.2L13.4 5L9.3 8.9"/></g></svg>
<div class="t" style="left:870px;top:1033.27px;font-size:12.2px;line-height:15px;color:#111;-webkit-text-stroke:0.12px #111;">-</div>
<div class="t" style="left:967px;top:1029.27px;font-size:12.2px;line-height:15px;color:#1f2330;-webkit-text-stroke:0.12px #1f2330;">-</div>
<div class="t" style="left:1132px;top:1029.27px;font-size:12.2px;line-height:15px;color:#1f2330;-webkit-text-stroke:0.12px #1f2330;">-</div>
<div class="t" style="left:1298px;top:1029.27px;font-size:12.2px;line-height:15px;color:#1f2330;-webkit-text-stroke:0.12px #1f2330;">-</div>
<div class="t" style="left:1511px;top:1029.27px;font-size:12.2px;line-height:15px;color:#1f2330;-webkit-text-stroke:0.12px #1f2330;">-</div>
<div class="t" style="left:1677px;top:1029.27px;font-size:12.2px;line-height:15px;color:#1f2330;-webkit-text-stroke:0.12px #1f2330;">-</div>
<div class="t" style="left:1890px;top:1029.27px;font-size:12.2px;line-height:15px;color:#1f2330;-webkit-text-stroke:0.12px #1f2330;">-</div>
<div class="t" style="left:2104px;top:1029.27px;font-size:12.2px;line-height:15px;color:#1f2330;-webkit-text-stroke:0.12px #1f2330;">-</div>
<div class="t" style="left:2318px;top:1029.27px;font-size:12.2px;line-height:15px;color:#1f2330;-webkit-text-stroke:0.12px #1f2330;">-</div>
<div class="r" style="left:330px;top:1059px;width:530px;height:37px;background:#f1f1f1"></div>
<div class="r" style="left:330px;top:1096px;width:2153px;height:1px;background:#dcdcdc"></div>
<div class="r" style="left:340px;top:1068px;width:16px;height:16px;border:1.5px solid #666;border-radius:3px;background:#fff;box-sizing:border-box"></div>
<div class="r" style="left:378px;top:1073px;width:10px;height:10px;background:#666;border-radius:5px"></div>
<div class="t" style="left:435px;top:1071.20px;font-size:12.4px;line-height:15px;color:#1a6fcf;-webkit-text-stroke:0.1px #1a6fcf;">SPP-WS-3</div>
<div class="t" style="left:586px;top:1071.27px;font-size:12.2px;line-height:15px;color:#3d4045;-webkit-text-stroke:0.12px #3d4045;">SPP-WS-3</div>
<svg class="r" style="left:786px;top:1068px" width="16" height="17" viewBox="0 0 16 17"><g fill="none" stroke="#0b6bd3" stroke-width="1.2"><path d="M2.9 6.4H1.1V14.2H14.2V6.4H12.4" opacity="0.85"/><path d="M7.6 14.2V16.2M4.6 16.5H11.4" stroke-width="1.3"/></g><path d="M3.2 1.6C6.6 1 9.3 2.6 9.7 6.4H11.2L8 10.3L4.9 6.4H6.8C6.8 4 5.6 2.4 3.2 1.6Z" fill="#0b6bd3"/></svg>
<svg class="r" style="left:808px;top:1074px" width="15" height="11" viewBox="0 0 15 11"><g stroke="#0b6bd3" stroke-width="1.5" fill="none"><path d="M0.8 5H12.6" opacity="0.6"/><path d="M9.3 1.2L13.4 5L9.3 8.9"/></g></svg>
<div class="t" style="left:870px;top:1071.27px;font-size:12.2px;line-height:15px;color:#111;-webkit-text-stroke:0.12px #111;">-</div>
<div class="t" style="left:967px;top:1067.27px;font-size:12.2px;line-height:15px;color:#1f2330;-webkit-text-stroke:0.12px #1f2330;">-</div>
<div class="t" style="left:1132px;top:1067.27px;font-size:12.2px;line-height:15px;color:#1f2330;-webkit-text-stroke:0.12px #1f2330;">-</div>
<div class="t" style="left:1298px;top:1067.27px;font-size:12.2px;line-height:15px;color:#1f2330;-webkit-text-stroke:0.12px #1f2330;">-</div>
<div class="t" style="left:1511px;top:1067.27px;font-size:12.2px;line-height:15px;color:#1f2330;-webkit-text-stroke:0.12px #1f2330;">-</div>
<div class="t" style="left:1677px;top:1067.27px;font-size:12.2px;line-height:15px;color:#1f2330;-webkit-text-stroke:0.12px #1f2330;">-</div>
<div class="t" style="left:1890px;top:1067.27px;font-size:12.2px;line-height:15px;color:#1f2330;-webkit-text-stroke:0.12px #1f2330;">-</div>
<div class="t" style="left:2104px;top:1067.27px;font-size:12.2px;line-height:15px;color:#1f2330;-webkit-text-stroke:0.12px #1f2330;">-</div>
<div class="t" style="left:2318px;top:1067.27px;font-size:12.2px;line-height:15px;color:#1f2330;-webkit-text-stroke:0.12px #1f2330;">-</div>
<div class="r" style="left:330px;top:1097px;width:530px;height:37px;background:#f1f1f1"></div>
<div class="r" style="left:330px;top:1134px;width:2153px;height:1px;background:#dcdcdc"></div>
<div class="r" style="left:340px;top:1106px;width:16px;height:16px;border:1.5px solid #666;border-radius:3px;background:#fff;box-sizing:border-box"></div>
<div class="r" style="left:378px;top:1111px;width:10px;height:10px;background:#666;border-radius:5px"></div>
<div class="t" style="left:435px;top:1109.20px;font-size:12.4px;line-height:15px;color:#1a6fcf;-webkit-text-stroke:0.1px #1a6fcf;">SPP-WS-2</div>
<div class="t" style="left:586px;top:1109.27px;font-size:12.2px;line-height:15px;color:#3d4045;-webkit-text-stroke:0.12px #3d4045;">SPP-WS-2</div>
<svg class="r" style="left:786px;top:1106px" width="16" height="17" viewBox="0 0 16 17"><g fill="none" stroke="#0b6bd3" stroke-width="1.2"><path d="M2.9 6.4H1.1V14.2H14.2V6.4H12.4" opacity="0.85"/><path d="M7.6 14.2V16.2M4.6 16.5H11.4" stroke-width="1.3"/></g><path d="M3.2 1.6C6.6 1 9.3 2.6 9.7 6.4H11.2L8 10.3L4.9 6.4H6.8C6.8 4 5.6 2.4 3.2 1.6Z" fill="#0b6bd3"/></svg>
<svg class="r" style="left:808px;top:1112px" width="15" height="11" viewBox="0 0 15 11"><g stroke="#0b6bd3" stroke-width="1.5" fill="none"><path d="M0.8 5H12.6" opacity="0.6"/><path d="M9.3 1.2L13.4 5L9.3 8.9"/></g></svg>
<div class="t" style="left:870px;top:1109.27px;font-size:12.2px;line-height:15px;color:#111;-webkit-text-stroke:0.12px #111;">-</div>
<div class="t" style="left:967px;top:1105.27px;font-size:12.2px;line-height:15px;color:#1f2330;-webkit-text-stroke:0.12px #1f2330;">-</div>
<div class="t" style="left:1132px;top:1105.27px;font-size:12.2px;line-height:15px;color:#1f2330;-webkit-text-stroke:0.12px #1f2330;">-</div>
<div class="t" style="left:1298px;top:1105.27px;font-size:12.2px;line-height:15px;color:#1f2330;-webkit-text-stroke:0.12px #1f2330;">-</div>
<div class="t" style="left:1511px;top:1105.27px;font-size:12.2px;line-height:15px;color:#1f2330;-webkit-text-stroke:0.12px #1f2330;">-</div>
<div class="t" style="left:1677px;top:1105.27px;font-size:12.2px;line-height:15px;color:#1f2330;-webkit-text-stroke:0.12px #1f2330;">-</div>
<div class="t" style="left:1890px;top:1105.27px;font-size:12.2px;line-height:15px;color:#1f2330;-webkit-text-stroke:0.12px #1f2330;">-</div>
<div class="t" style="left:2104px;top:1105.27px;font-size:12.2px;line-height:15px;color:#1f2330;-webkit-text-stroke:0.12px #1f2330;">-</div>
<div class="t" style="left:2318px;top:1105.27px;font-size:12.2px;line-height:15px;color:#1f2330;-webkit-text-stroke:0.12px #1f2330;">-</div>
<div class="r" style="left:330px;top:1135px;width:530px;height:37px;background:#f1f1f1"></div>
<div class="r" style="left:330px;top:1172px;width:2153px;height:1px;background:#dcdcdc"></div>
<div class="r" style="left:340px;top:1144px;width:16px;height:16px;border:1.5px solid #666;border-radius:3px;background:#fff;box-sizing:border-box"></div>
<div class="r" style="left:378px;top:1149px;width:10px;height:10px;background:#666;border-radius:5px"></div>
<div class="t" style="left:435px;top:1147.20px;font-size:12.4px;line-height:15px;color:#1a6fcf;-webkit-text-stroke:0.1px #1a6fcf;">SPP-WS-1</div>
<div class="t" style="left:586px;top:1147.27px;font-size:12.2px;line-height:15px;color:#3d4045;-webkit-text-stroke:0.12px #3d4045;">SPP-WS-1</div>
<svg class="r" style="left:786px;top:1144px" width="16" height="17" viewBox="0 0 16 17"><g fill="none" stroke="#0b6bd3" stroke-width="1.2"><path d="M2.9 6.4H1.1V14.2H14.2V6.4H12.4" opacity="0.85"/><path d="M7.6 14.2V16.2M4.6 16.5H11.4" stroke-width="1.3"/></g><path d="M3.2 1.6C6.6 1 9.3 2.6 9.7 6.4H11.2L8 10.3L4.9 6.4H6.8C6.8 4 5.6 2.4 3.2 1.6Z" fill="#0b6bd3"/></svg>
<svg class="r" style="left:808px;top:1150px" width="15" height="11" viewBox="0 0 15 11"><g stroke="#0b6bd3" stroke-width="1.5" fill="none"><path d="M0.8 5H12.6" opacity="0.6"/><path d="M9.3 1.2L13.4 5L9.3 8.9"/></g></svg>
<div class="t" style="left:870px;top:1147.27px;font-size:12.2px;line-height:15px;color:#111;-webkit-text-stroke:0.12px #111;">-</div>
<div class="t" style="left:967px;top:1143.27px;font-size:12.2px;line-height:15px;color:#1f2330;-webkit-text-stroke:0.12px #1f2330;">-</div>
<div class="t" style="left:1132px;top:1143.27px;font-size:12.2px;line-height:15px;color:#1f2330;-webkit-text-stroke:0.12px #1f2330;">-</div>
<div class="t" style="left:1298px;top:1143.27px;font-size:12.2px;line-height:15px;color:#1f2330;-webkit-text-stroke:0.12px #1f2330;">-</div>
<div class="t" style="left:1511px;top:1143.27px;font-size:12.2px;line-height:15px;color:#1f2330;-webkit-text-stroke:0.12px #1f2330;">-</div>
<div class="t" style="left:1677px;top:1143.27px;font-size:12.2px;line-height:15px;color:#1f2330;-webkit-text-stroke:0.12px #1f2330;">-</div>
<div class="t" style="left:1890px;top:1143.27px;font-size:12.2px;line-height:15px;color:#1f2330;-webkit-text-stroke:0.12px #1f2330;">-</div>
<div class="t" style="left:2104px;top:1143.27px;font-size:12.2px;line-height:15px;color:#1f2330;-webkit-text-stroke:0.12px #1f2330;">-</div>
<div class="t" style="left:2318px;top:1143.27px;font-size:12.2px;line-height:15px;color:#1f2330;-webkit-text-stroke:0.12px #1f2330;">-</div>
<div class="r" style="left:330px;top:1173px;width:530px;height:37px;background:#f1f1f1"></div>
<div class="r" style="left:330px;top:1210px;width:2153px;height:1px;background:#dcdcdc"></div>
<div class="r" style="left:340px;top:1182px;width:16px;height:16px;border:1.5px solid #666;border-radius:3px;background:#fff;box-sizing:border-box"></div>
<div class="r" style="left:378px;top:1187px;width:10px;height:10px;background:#666;border-radius:5px"></div>
<div class="t" style="left:435px;top:1185.20px;font-size:12.4px;line-height:15px;color:#1a6fcf;-webkit-text-stroke:0.1px #1a6fcf;">SPP-WS-1</div>
<div class="t" style="left:586px;top:1185.27px;font-size:12.2px;line-height:15px;color:#3d4045;-webkit-text-stroke:0.12px #3d4045;">SPP-WS-1</div>
<svg class="r" style="left:786px;top:1182px" width="16" height="17" viewBox="0 0 16 17"><g fill="none" stroke="#0b6bd3" stroke-width="1.2"><path d="M2.9 6.4H1.1V14.2H14.2V6.4H12.4" opacity="0.85"/><path d="M7.6 14.2V16.2M4.6 16.5H11.4" stroke-width="1.3"/></g><path d="M3.2 1.6C6.6 1 9.3 2.6 9.7 6.4H11.2L8 10.3L4.9 6.4H6.8C6.8 4 5.6 2.4 3.2 1.6Z" fill="#0b6bd3"/></svg>
<svg class="r" style="left:808px;top:1188px" width="15" height="11" viewBox="0 0 15 11"><g stroke="#0b6bd3" stroke-width="1.5" fill="none"><path d="M0.8 5H12.6" opacity="0.6"/><path d="M9.3 1.2L13.4 5L9.3 8.9"/></g></svg>
<div class="t" style="left:870px;top:1185.27px;font-size:12.2px;line-height:15px;color:#111;-webkit-text-stroke:0.12px #111;">-</div>
<div class="t" style="left:967px;top:1181.27px;font-size:12.2px;line-height:15px;color:#1f2330;-webkit-text-stroke:0.12px #1f2330;">-</div>
<div class="t" style="left:1132px;top:1181.27px;font-size:12.2px;line-height:15px;color:#1f2330;-webkit-text-stroke:0.12px #1f2330;">-</div>
<div class="t" style="left:1298px;top:1181.27px;font-size:12.2px;line-height:15px;color:#1f2330;-webkit-text-stroke:0.12px #1f2330;">-</div>
<div class="t" style="left:1511px;top:1181.27px;font-size:12.2px;line-height:15px;color:#1f2330;-webkit-text-stroke:0.12px #1f2330;">-</div>
<div class="t" style="left:1677px;top:1181.27px;font-size:12.2px;line-height:15px;color:#1f2330;-webkit-text-stroke:0.12px #1f2330;">-</div>
<div class="t" style="left:1890px;top:1181.27px;font-size:12.2px;line-height:15px;color:#1f2330;-webkit-text-stroke:0.12px #1f2330;">-</div>
<div class="t" style="left:2104px;top:1181.27px;font-size:12.2px;line-height:15px;color:#1f2330;-webkit-text-stroke:0.12px #1f2330;">-</div>
<div class="t" style="left:2318px;top:1181.27px;font-size:12.2px;line-height:15px;color:#1f2330;-webkit-text-stroke:0.12px #1f2330;">-</div>
<div class="r" style="left:330px;top:1211px;width:530px;height:37px;background:#f1f1f1"></div>
<div class="r" style="left:330px;top:1248px;width:2153px;height:1px;background:#dcdcdc"></div>
<div class="r" style="left:340px;top:1220px;width:16px;height:16px;border:1.5px solid #666;border-radius:3px;background:#fff;box-sizing:border-box"></div>
<div class="r" style="left:378px;top:1225px;width:10px;height:10px;background:#666;border-radius:5px"></div>
<div class="t" style="left:435px;top:1223.20px;font-size:12.4px;line-height:15px;color:#1a6fcf;-webkit-text-stroke:0.1px #1a6fcf;">DESKTOP-0FVSM6J</div>
<div class="t" style="left:586px;top:1223.27px;font-size:12.2px;line-height:15px;color:#3d4045;-webkit-text-stroke:0.12px #3d4045;">Iana-Win10</div>
<svg class="r" style="left:786px;top:1220px" width="16" height="17" viewBox="0 0 16 17"><g fill="none" stroke="#0b6bd3" stroke-width="1.2"><path d="M2.9 6.4H1.1V14.2H14.2V6.4H12.4" opacity="0.85"/><path d="M7.6 14.2V16.2M4.6 16.5H11.4" stroke-width="1.3"/></g><path d="M3.2 1.6C6.6 1 9.3 2.6 9.7 6.4H11.2L8 10.3L4.9 6.4H6.8C6.8 4 5.6 2.4 3.2 1.6Z" fill="#0b6bd3"/></svg>
<svg class="r" style="left:808px;top:1226px" width="15" height="11" viewBox="0 0 15 11"><g stroke="#0b6bd3" stroke-width="1.5" fill="none"><path d="M0.8 5H12.6" opacity="0.6"/><path d="M9.3 1.2L13.4 5L9.3 8.9"/></g></svg>
<div class="t" style="left:870px;top:1223.27px;font-size:12.2px;line-height:15px;color:#111;-webkit-text-stroke:0.12px #111;">-</div>
<div class="t" style="left:967px;top:1219.27px;font-size:12.2px;line-height:15px;color:#1f2330;-webkit-text-stroke:0.12px #1f2330;">Critical</div>
<div class="t" style="left:1132px;top:1219.27px;font-size:12.2px;line-height:15px;color:#1f2330;-webkit-text-stroke:0.12px #1f2330;">15.0.28863</div>
<div class="t" style="left:1298px;top:1219.27px;font-size:12.2px;line-height:15px;color:#1f2330;-webkit-text-stroke:0.12px #1f2330;">New protection plan (2);New pro...</div>
<div class="t" style="left:1511px;top:1219.27px;font-size:12.2px;line-height:15px;color:#1f2330;-webkit-text-stroke:0.12px #1f2330;">Error</div>
<div class="t" style="left:1677px;top:1219.27px;font-size:12.2px;line-height:15px;color:#1f2330;-webkit-text-stroke:0.12px #1f2330;">-</div>
<div class="t" style="left:1890px;top:1219.27px;font-size:12.2px;line-height:15px;color:#1f2330;-webkit-text-stroke:0.12px #1f2330;">Fri, Sep 30, 2022 at 3:04 am (UTC...</div>
<div class="t" style="left:2104px;top:1219.27px;font-size:12.2px;line-height:15px;color:#1f2330;-webkit-text-stroke:0.12px #1f2330;">-</div>
<div class="t" style="left:2318px;top:1217.46px;font-size:12.8px;line-height:15px;color:#0d6a93;letter-spacing:-0.3px;-webkit-text-stroke:0.45px #0d6a93;">Go to</div>
<div class="r" style="left:330px;top:1249px;width:530px;height:37px;background:#f1f1f1"></div>
<div class="r" style="left:330px;top:1286px;width:2153px;height:1px;background:#dcdcdc"></div>
<div class="r" style="left:340px;top:1258px;width:16px;height:16px;border:1.5px solid #666;border-radius:3px;background:#fff;box-sizing:border-box"></div>
<div class="r" style="left:378px;top:1263px;width:10px;height:10px;background:#666;border-radius:5px"></div>
<div class="t" style="left:435px;top:1261.20px;font-size:12.4px;line-height:15px;color:#1a6fcf;-webkit-text-stroke:0.1px #1a6fcf;">SPP-WS-3</div>
<div class="t" style="left:586px;top:1261.27px;font-size:12.2px;line-height:15px;color:#3d4045;-webkit-text-stroke:0.12px #3d4045;">SPP-WS-3</div>
<svg class="r" style="left:786px;top:1258px" width="16" height="17" viewBox="0 0 16 17"><g fill="none" stroke="#0b6bd3" stroke-width="1.2"><path d="M2.9 6.4H1.1V14.2H14.2V6.4H12.4" opacity="0.85"/><path d="M7.6 14.2V16.2M4.6 16.5H11.4" stroke-width="1.3"/></g><path d="M3.2 1.6C6.6 1 9.3 2.6 9.7 6.4H11.2L8 10.3L4.9 6.4H6.8C6.8 4 5.6 2.4 3.2 1.6Z" fill="#0b6bd3"/></svg>
<svg class="r" style="left:808px;top:1264px" width="15" height="11" viewBox="0 0 15 11"><g stroke="#0b6bd3" stroke-width="1.5" fill="none"><path d="M0.8 5H12.6" opacity="0.6"/><path d="M9.3 1.2L13.4 5L9.3 8.9"/></g></svg>
<div class="t" style="left:870px;top:1261.27px;font-size:12.2px;line-height:15px;color:#111;-webkit-text-stroke:0.12px #111;">-</div>
<div class="t" style="left:967px;top:1257.27px;font-size:12.2px;line-height:15px;color:#1f2330;-webkit-text-stroke:0.12px #1f2330;">-</div>
<div class="t" style="left:1132px;top:1257.27px;font-size:12.2px;line-height:15px;color:#1f2330;-webkit-text-stroke:0.12px #1f2330;">-</div>
<div class="t" style="left:1298px;top:1257.27px;font-size:12.2px;line-height:15px;color:#1f2330;-webkit-text-stroke:0.12px #1f2330;">-</div>
<div class="t" style="left:1511px;top:1257.27px;font-size:12.2px;line-height:15px;color:#1f2330;-webkit-text-stroke:0.12px #1f2330;">-</div>
<div class="t" style="left:1677px;top:1257.27px;font-size:12.2px;line-height:15px;color:#1f2330;-webkit-text-stroke:0.12px #1f2330;">-</div>
<div class="t" style="left:1890px;top:1257.27px;font-size:12.2px;line-height:15px;color:#1f2330;-webkit-text-stroke:0.12px #1f2330;">-</div>
<div class="t" style="left:2104px;top:1257.27px;font-size:12.2px;line-height:15px;color:#1f2330;-webkit-text-stroke:0.12px #1f2330;">-</div>
<div class="t" style="left:2318px;top:1257.27px;font-size:12.2px;line-height:15px;color:#1f2330;-webkit-text-stroke:0.12px #1f2330;">-</div>
<div class="r" style="left:330px;top:1287px;width:530px;height:37px;background:#f1f1f1"></div>
<div class="r" style="left:330px;top:1324px;width:2153px;height:1px;background:#dcdcdc"></div>
<div class="r" style="left:340px;top:1296px;width:16px;height:16px;border:1.5px solid #666;border-radius:3px;background:#fff;box-sizing:border-box"></div>
<div class="r" style="left:378px;top:1301px;width:10px;height:10px;background:#666;border-radius:5px"></div>
<div class="t" style="left:435px;top:1299.20px;font-size:12.4px;line-height:15px;color:#1a6fcf;-webkit-text-stroke:0.1px #1a6fcf;">SPP-WS-1</div>
<div class="t" style="left:586px;top:1299.27px;font-size:12.2px;line-height:15px;color:#3d4045;-webkit-text-stroke:0.12px #3d4045;">SPP-WS-1</div>
<svg class="r" style="left:786px;top:1296px" width="16" height="17" viewBox="0 0 16 17"><g fill="none" stroke="#0b6bd3" stroke-width="1.2"><path d="M2.9 6.4H1.1V14.2H14.2V6.4H12.4" opacity="0.85"/><path d="M7.6 14.2V16.2M4.6 16.5H11.4" stroke-width="1.3"/></g><path d="M3.2 1.6C6.6 1 9.3 2.6 9.7 6.4H11.2L8 10.3L4.9 6.4H6.8C6.8 4 5.6 2.4 3.2 1.6Z" fill="#0b6bd3"/></svg>
<svg class="r" style="left:808px;top:1302px" width="15" height="11" viewBox="0 0 15 11"><g stroke="#0b6bd3" stroke-width="1.5" fill="none"><path d="M0.8 5H12.6" opacity="0.6"/><path d="M9.3 1.2L13.4 5L9.3 8.9"/></g></svg>
<div class="t" style="left:870px;top:1299.27px;font-size:12.2px;line-height:15px;color:#111;-webkit-text-stroke:0.12px #111;">-</div>
<div class="t" style="left:967px;top:1295.27px;font-size:12.2px;line-height:15px;color:#1f2330;-webkit-text-stroke:0.12px #1f2330;">-</div>
<div class="t" style="left:1132px;top:1295.27px;font-size:12.2px;line-height:15px;color:#1f2330;-webkit-text-stroke:0.12px #1f2330;">-</div>
<div class="t" style="left:1298px;top:1295.27px;font-size:12.2px;line-height:15px;color:#1f2330;-webkit-text-stroke:0.12px #1f2330;">-</div>
<div class="t" style="left:1511px;top:1295.27px;font-size:12.2px;line-height:15px;color:#1f2330;-webkit-text-stroke:0.12px #1f2330;">-</div>
<div class="t" style="left:1677px;top:1295.27px;font-size:12.2px;line-height:15px;color:#1f2330;-webkit-text-stroke:0.12px #1f2330;">-</div>
<div class="t" style="left:1890px;top:1295.27px;font-size:12.2px;line-height:15px;color:#1f2330;-webkit-text-stroke:0.12px #1f2330;">-</div>
<div class="t" style="left:2104px;top:1295.27px;font-size:12.2px;line-height:15px;color:#1f2330;-webkit-text-stroke:0.12px #1f2330;">-</div>
<div class="t" style="left:2318px;top:1295.27px;font-size:12.2px;line-height:15px;color:#1f2330;-webkit-text-stroke:0.12px #1f2330;">-</div>
<div class="r" style="left:330px;top:1325px;width:530px;height:37px;background:#f1f1f1"></div>
<div class="r" style="left:330px;top:1362px;width:2153px;height:1px;background:#dcdcdc"></div>
<div class="r" style="left:340px;top:1334px;width:16px;height:16px;border:1.5px solid #666;border-radius:3px;background:#fff;box-sizing:border-box"></div>
<div class="r" style="left:378px;top:1339px;width:10px;height:10px;background:#666;border-radius:5px"></div>
<div class="t" style="left:435px;top:1337.20px;font-size:12.4px;line-height:15px;color:#1a6fcf;-webkit-text-stroke:0.1px #1a6fcf;">SPP-WS-3</div>
<div class="t" style="left:586px;top:1337.27px;font-size:12.2px;line-height:15px;color:#3d4045;-webkit-text-stroke:0.12px #3d4045;">SPP-WS-3</div>
<svg class="r" style="left:786px;top:1334px" width="16" height="17" viewBox="0 0 16 17"><g fill="none" stroke="#0b6bd3" stroke-width="1.2"><path d="M2.9 6.4H1.1V14.2H14.2V6.4H12.4" opacity="0.85"/><path d="M7.6 14.2V16.2M4.6 16.5H11.4" stroke-width="1.3"/></g><path d="M3.2 1.6C6.6 1 9.3 2.6 9.7 6.4H11.2L8 10.3L4.9 6.4H6.8C6.8 4 5.6 2.4 3.2 1.6Z" fill="#0b6bd3"/></svg>
<svg class="r" style="left:808px;top:1340px" width="15" height="11" viewBox="0 0 15 11"><g stroke="#0b6bd3" stroke-width="1.5" fill="none"><path d="M0.8 5H12.6" opacity="0.6"/><path d="M9.3 1.2L13.4 5L9.3 8.9"/></g></svg>
<div class="t" style="left:870px;top:1337.27px;font-size:12.2px;line-height:15px;color:#111;-webkit-text-stroke:0.12px #111;">-</div>
<div class="t" style="left:967px;top:1333.27px;font-size:12.2px;line-height:15px;color:#1f2330;-webkit-text-stroke:0.12px #1f2330;">-</div>
<div class="t" style="left:1132px;top:1333.27px;font-size:12.2px;line-height:15px;color:#1f2330;-webkit-text-stroke:0.12px #1f2330;">-</div>
<div class="t" style="left:1298px;top:1333.27px;font-size:12.2px;line-height:15px;color:#1f2330;-webkit-text-stroke:0.12px #1f2330;">-</div>
<div class="t" style="left:1511px;top:1333.27px;font-size:12.2px;line-height:15px;color:#1f2330;-webkit-text-stroke:0.12px #1f2330;">-</div>
<div class="t" style="left:1677px;top:1333.27px;font-size:12.2px;line-height:15px;color:#1f2330;-webkit-text-stroke:0.12px #1f2330;">-</div>
<div class="t" style="left:1890px;top:1333.27px;font-size:12.2px;line-height:15px;color:#1f2330;-webkit-text-stroke:0.12px #1f2330;">-</div>
<div class="t" style="left:2104px;top:1333.27px;font-size:12.2px;line-height:15px;color:#1f2330;-webkit-text-stroke:0.12px #1f2330;">-</div>
<div class="t" style="left:2318px;top:1333.27px;font-size:12.2px;line-height:15px;color:#1f2330;-webkit-text-stroke:0.12px #1f2330;">-</div>
<div class="r" style="left:2398px;top:1258px;width:50px;height:50px;background:#4156a8;border-radius:25px;box-shadow:0 1px 3px rgba(0,0,0,0.15)"></div>
<svg class="r" style="left:2403px;top:1266px" width="40" height="30" viewBox="0 0 40 30"><g stroke="#fff" stroke-width="1.4" fill="none" stroke-linecap="round"><path d="M8.6 22.3C11 15 15 11.9 19.9 11.9C24.8 11.9 29 15 31.6 22.3"/><path d="M7.4 10.6C11 12 15 14 18.5 20.3L19.9 18L21.4 20.8C25 14 29 12 32.3 10.6"/></g></svg>
<svg class="r" style="left:2525px;top:79px" width="16" height="17" viewBox="0 0 16 17"><path d="M1.3 1.5H14.7L9.6 7.6V15.3L8 16.2L6.4 15.3V7.6Z" stroke="#3a3a3a" stroke-width="1.3" fill="none" stroke-linejoin="round"/></svg>
<svg class="r" style="left:2525px;top:122px" width="16" height="11" viewBox="0 0 16 11"><g stroke="#333" stroke-width="1.1"><path d="M4.2 1.5H15M4.2 5.5H15M4.2 9.5H15"/><path d="M0.8 1.5H2.2M0.8 5.5H2.2M0.8 9.5H2.2"/></g></svg>
<svg class="r" style="left:2524px;top:160px" width="18" height="17" viewBox="0 0 18 17"><g stroke="#333" stroke-width="1" fill="none"><rect x="1" y="1" width="6.5" height="5.2"/><rect x="10" y="1" width="6.5" height="5.2"/><rect x="5.5" y="9.5" width="6.5" height="5.2"/><path d="M4.2 6.2V7.5M13.2 6.2V7.5M8.8 14.7V16"/></g></svg>
<svg class="r" style="left:2524px;top:199px" width="18" height="18" viewBox="0 0 18 18"><path d="M1.2 1.3L6.2 2.8V15.4L1.2 16.9Z" fill="#2d2d2d"/><path d="M8.4 3.2L16.8 1.4V16.8L8.4 15Z" stroke="#2d2d2d" stroke-width="1.2" fill="none"/><path d="M4.5 7.9H9.4V5.8L13.6 9.1L9.4 12.4V10.3H4.5Z" fill="#2d2d2d"/></svg>
</div></body></html>
